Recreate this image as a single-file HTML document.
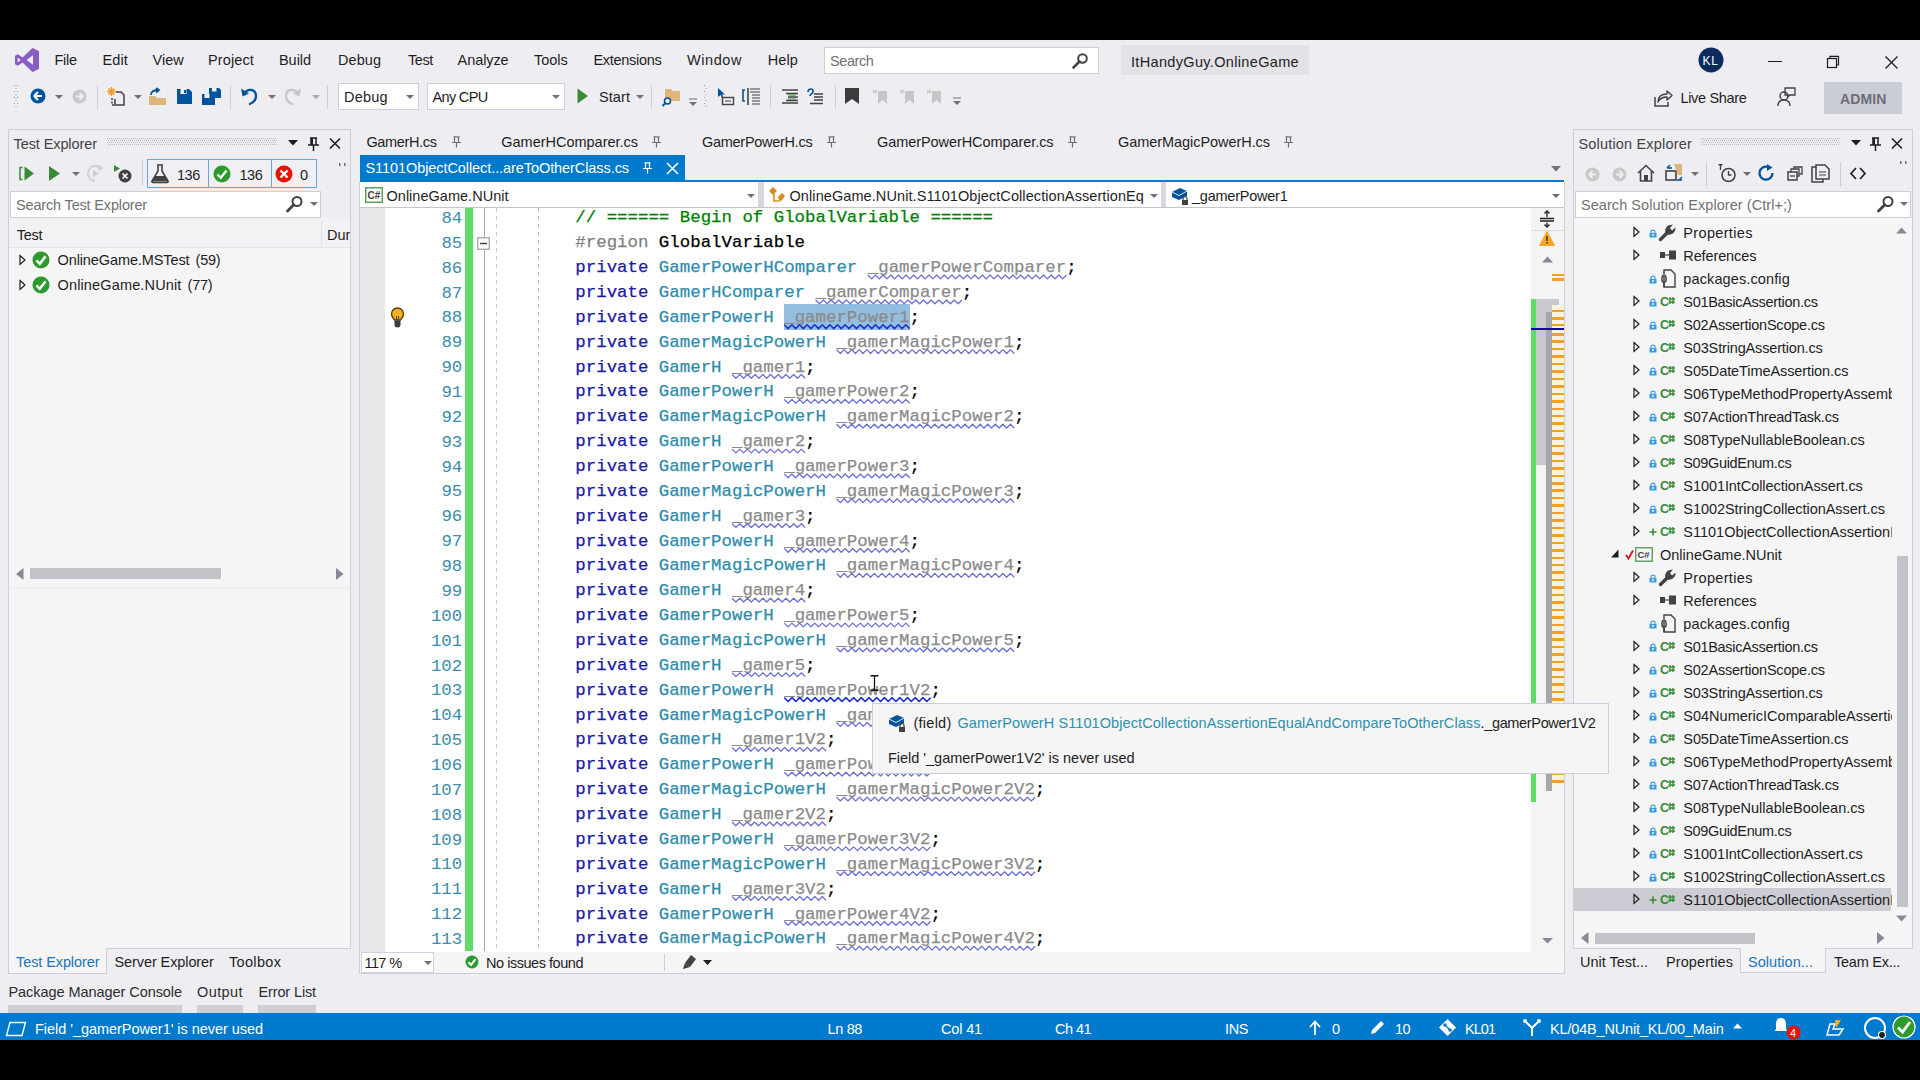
<!DOCTYPE html><html><head><meta charset="utf-8"><title>VS</title><style>html,body{margin:0;padding:0;width:1920px;height:1080px;overflow:hidden;background:#000}
.a{position:absolute;white-space:pre;margin:0;padding:0}
.s{font-family:"Liberation Sans",sans-serif}
.m{font-family:"Liberation Mono",monospace}
.code{font-size:17.4px;line-height:17.4px;letter-spacing:0.008px;-webkit-text-stroke:0.25px currentColor}
svg.a{overflow:visible}
</style></head><body><div class="a" style="left:0px;top:0px;width:1920px;height:40px;background:#000;"></div>
<div class="a" style="left:0px;top:40px;width:1920px;height:1000px;background:#EEEEF2;"></div>
<div class="a" style="left:0px;top:1040px;width:1920px;height:40px;background:#000;"></div>
<svg class="a" style="left:15px;top:48px;" width="24" height="24" viewBox="0 0 24 24"><path fill="#865FC5" fill-rule="evenodd" d="M17.5,0 L24,3 L24,21 L17.5,24 L7.5,14.5 L3,17.8 L0,16.3 L0,7.7 L3,6.2 L7.5,9.5 Z M18,7.3 L18,16.7 L11.6,12 Z M2.6,9.6 L2.6,14.4 L5.6,12 Z"/></svg>
<div class="a s" style="left:54.40px;top:53.23px;font-size:14.5px;line-height:14.5px;color:#1E1E1E;letter-spacing:-0.219px;">File</div>
<div class="a s" style="left:102.50px;top:53.23px;font-size:14.5px;line-height:14.5px;color:#1E1E1E;letter-spacing:0.125px;">Edit</div>
<div class="a s" style="left:152.50px;top:53.23px;font-size:14.5px;line-height:14.5px;color:#1E1E1E;letter-spacing:0.007px;">View</div>
<div class="a s" style="left:208.00px;top:53.23px;font-size:14.5px;line-height:14.5px;color:#1E1E1E;letter-spacing:0.123px;">Project</div>
<div class="a s" style="left:279.00px;top:53.23px;font-size:14.5px;line-height:14.5px;color:#1E1E1E;letter-spacing:-0.050px;">Build</div>
<div class="a s" style="left:338.00px;top:53.23px;font-size:14.5px;line-height:14.5px;color:#1E1E1E;letter-spacing:0.053px;">Debug</div>
<div class="a s" style="left:408.00px;top:53.23px;font-size:14.5px;line-height:14.5px;color:#1E1E1E;letter-spacing:-0.448px;">Test</div>
<div class="a s" style="left:457.60px;top:53.23px;font-size:14.5px;line-height:14.5px;color:#1E1E1E;letter-spacing:-0.085px;">Analyze</div>
<div class="a s" style="left:534.00px;top:53.23px;font-size:14.5px;line-height:14.5px;color:#1E1E1E;letter-spacing:-0.032px;">Tools</div>
<div class="a s" style="left:593.40px;top:53.23px;font-size:14.5px;line-height:14.5px;color:#1E1E1E;letter-spacing:-0.294px;">Extensions</div>
<div class="a s" style="left:687.00px;top:53.23px;font-size:14.5px;line-height:14.5px;color:#1E1E1E;letter-spacing:0.570px;">Window</div>
<div class="a s" style="left:767.70px;top:53.23px;font-size:14.5px;line-height:14.5px;color:#1E1E1E;letter-spacing:0.118px;">Help</div>
<div class="a" style="left:824px;top:47px;width:275px;height:27px;background:#FFFFFF;box-sizing:border-box;border:1px solid #CCCEDB;"></div>
<div class="a s" style="left:830.00px;top:53.73px;font-size:14.5px;line-height:14.5px;color:#717171;letter-spacing:-0.409px;">Search</div>
<svg class="a" style="left:1070px;top:51px;" width="20" height="20" viewBox="0 0 20 20"><circle cx="12.5" cy="7.5" r="4.3" fill="none" stroke="#424242" stroke-width="2"/><path d="M9.5,10.5 L3.5,16.5" stroke="#424242" stroke-width="2.6" stroke-linecap="round"/></svg>
<div class="a" style="left:1121px;top:45px;width:188px;height:30px;background:#E2E2E7;"></div>
<div class="a s" style="left:1131.00px;top:54.73px;font-size:14.5px;line-height:14.5px;color:#1E1E1E;letter-spacing:0.337px;">ItHandyGuy.OnlineGame</div>
<svg class="a" style="left:1698px;top:47px;" width="26" height="26" viewBox="0 0 26 26"><circle cx="13" cy="13" r="12.5" fill="#0C2A5E"/></svg>
<div class="a s" style="left:1702.50px;top:54.84px;font-size:12px;line-height:12px;color:#FFFFFF;letter-spacing:0.656px;">KL</div>
<div class="a" style="left:1768px;top:60.5px;width:14px;height:1.2px;background:#1E1E1E;"></div>
<svg class="a" style="left:1825px;top:54px;" width="16" height="16" viewBox="0 0 16 16"><rect x="2.5" y="4.5" width="9" height="9" fill="none" stroke="#1E1E1E" stroke-width="1.2"/><path d="M5,4.5 V2.3 H13.5 V11 H11.5" fill="none" stroke="#1E1E1E" stroke-width="1.2"/></svg>
<svg class="a" style="left:1884px;top:55px;" width="15" height="15" viewBox="0 0 15 15"><path d="M1.5,1.5 L13.5,13.5 M13.5,1.5 L1.5,13.5" stroke="#1E1E1E" stroke-width="1.3"/></svg>
<svg class="a" style="left:14px;top:85px;" width="5" height="24" viewBox="0 0 5 24"><rect x="0" y="0" width="1" height="1" fill="#999"/><rect x="3" y="0" width="1" height="1" fill="#999"/><rect x="1.5" y="3" width="1" height="1" fill="#999"/><rect x="0" y="6" width="1" height="1" fill="#999"/><rect x="3" y="6" width="1" height="1" fill="#999"/><rect x="1.5" y="9" width="1" height="1" fill="#999"/><rect x="0" y="12" width="1" height="1" fill="#999"/><rect x="3" y="12" width="1" height="1" fill="#999"/><rect x="1.5" y="15" width="1" height="1" fill="#999"/><rect x="0" y="18" width="1" height="1" fill="#999"/><rect x="3" y="18" width="1" height="1" fill="#999"/><rect x="1.5" y="21" width="1" height="1" fill="#999"/></svg>
<svg class="a" style="left:30px;top:88px;" width="16" height="16" viewBox="0 0 16 16"><circle cx="8" cy="8" r="7.5" fill="#00539C"/><path d="M4,8 L8,4 M4,8 L8,12 M4,8 H12" stroke="#fff" stroke-width="2.2" fill="none"/></svg>
<svg class="a" style="left:54.5px;top:94.5px;" width="8" height="5" viewBox="0 0 8 5"><path d="M0,0 H8 L4,4 Z" fill="#717171"/></svg>
<svg class="a" style="left:72px;top:89px;" width="15" height="15" viewBox="0 0 15 15"><circle cx="7.5" cy="7.5" r="7" fill="#C8C8C8"/><path d="M11,7.5 L7.5,4 M11,7.5 L7.5,11 M11,7.5 H4" stroke="#EEE" stroke-width="2" fill="none"/></svg>
<div class="a" style="left:97px;top:85px;width:1px;height:24px;background:#CCCEDB;"></div>
<svg class="a" style="left:107px;top:87px;" width="19" height="19" viewBox="0 0 19 19"><path d="M1.5,1.5 L7.5,7.5 M7.5,1.5 L1.5,7.5 M4.5,0 V9 M0,4.5 H9" stroke="#F09A2E" stroke-width="1.5"/><path d="M9,5 H14 L17,8 V18 H8 V12" fill="none" stroke="#424242" stroke-width="1.5"/><path d="M5,11 V18 H8" stroke="#424242" stroke-width="1.5" stroke-dasharray="2 1.5" fill="none"/></svg>
<svg class="a" style="left:133.5px;top:94.5px;" width="8" height="5" viewBox="0 0 8 5"><path d="M0,0 H8 L4,4 Z" fill="#717171"/></svg>
<svg class="a" style="left:148px;top:88px;" width="19" height="18" viewBox="0 0 19 18"><path d="M1,8 H7 L9,10 H18 V17 H1 Z" fill="#DCB67A"/><path d="M3,7 C3,3 6,2 10,2 M8,0 L11,2 L8,4.5" stroke="#00539C" stroke-width="1.8" fill="none"/></svg>
<svg class="a" style="left:176px;top:88px;" width="17" height="17" viewBox="0 0 17 17"><path d="M1,1 H13 L16,4 V16 H1 Z" fill="#00539C"/><rect x="4.5" y="1" width="6" height="5" fill="#EEEEF2"/><rect x="8" y="2" width="2" height="3" fill="#00539C"/></svg>
<svg class="a" style="left:202px;top:87px;" width="20" height="19" viewBox="0 0 20 19"><path d="M7,1 H17 L19,3 V11 H7 Z" fill="#00539C"/><rect x="10" y="1" width="4.5" height="3.5" fill="#EEEEF2"/><path d="M0,7 H11 L13,9 V18 H0 Z" fill="#00539C"/><rect x="2.5" y="7" width="5" height="4" fill="#EEEEF2"/></svg>
<div class="a" style="left:230px;top:85px;width:1px;height:24px;background:#CCCEDB;"></div>
<svg class="a" style="left:240px;top:87px;" width="18" height="19" viewBox="0 0 18 19"><path d="M4.5,6 C8,1 16,2 16,9 C16,13 13,16 9,17.5" stroke="#00539C" stroke-width="2.3" fill="none"/><path d="M1,1.5 L2.5,9.5 L9,6.5 Z" fill="#00539C"/></svg>
<svg class="a" style="left:268px;top:94.5px;" width="8" height="5" viewBox="0 0 8 5"><path d="M0,0 H8 L4,4 Z" fill="#717171"/></svg>
<svg class="a" style="left:284px;top:87px;" width="18" height="19" viewBox="0 0 18 19"><path d="M13.5,6 C10,1 2,2 2,9 C2,13 5,16 9,17.5" stroke="#C6C6C6" stroke-width="2.3" fill="none"/><path d="M17,1.5 L15.5,9.5 L9,6.5 Z" fill="#C6C6C6"/></svg>
<svg class="a" style="left:312px;top:94.5px;" width="8" height="5" viewBox="0 0 8 5"><path d="M0,0 H8 L4,4 Z" fill="#A8A8A8"/></svg>
<div class="a" style="left:327px;top:85px;width:1px;height:24px;background:#CCCEDB;"></div>
<div class="a" style="left:338px;top:83px;width:81px;height:27px;background:#FFFFFF;box-sizing:border-box;border:1px solid #CCCEDB;"></div>
<div class="a s" style="left:344.00px;top:89.73px;font-size:14.5px;line-height:14.5px;color:#1E1E1E;letter-spacing:0.213px;">Debug</div>
<svg class="a" style="left:405.5px;top:94.5px;" width="8" height="5" viewBox="0 0 8 5"><path d="M0,0 H8 L4,4 Z" fill="#717171"/></svg>
<div class="a" style="left:427px;top:83px;width:138px;height:27px;background:#FFFFFF;box-sizing:border-box;border:1px solid #CCCEDB;"></div>
<div class="a s" style="left:432.50px;top:89.73px;font-size:14.5px;line-height:14.5px;color:#1E1E1E;letter-spacing:-0.663px;">Any CPU</div>
<svg class="a" style="left:551.5px;top:94.5px;" width="8" height="5" viewBox="0 0 8 5"><path d="M0,0 H8 L4,4 Z" fill="#717171"/></svg>
<svg class="a" style="left:577px;top:88px;" width="12" height="16" viewBox="0 0 12 16"><path d="M0.5,0.5 L11,8 L0.5,15.5 Z" fill="#388A34"/></svg>
<div class="a s" style="left:599.00px;top:89.73px;font-size:14.5px;line-height:14.5px;color:#1E1E1E;letter-spacing:0.075px;">Start</div>
<svg class="a" style="left:635.5px;top:94.5px;" width="8" height="5" viewBox="0 0 8 5"><path d="M0,0 H8 L4,4 Z" fill="#717171"/></svg>
<div class="a" style="left:651px;top:85px;width:1px;height:24px;background:#CCCEDB;"></div>
<svg class="a" style="left:661px;top:87px;" width="20" height="20" viewBox="0 0 20 20"><path d="M4,2 H10 L12,4 H19 V14 H4 Z" fill="#DCB67A"/><circle cx="6.5" cy="14" r="3" fill="#EEEEF2" stroke="#00539C" stroke-width="1.6"/><path d="M4.5,16 L1.5,19" stroke="#00539C" stroke-width="2"/></svg>
<svg class="a" style="left:689px;top:98px;" width="9" height="10" viewBox="0 0 9 10"><path d="M0,1 H8" stroke="#717171" stroke-width="1"/><path d="M0,4 H8 L4,8 Z" fill="#717171"/></svg>
<svg class="a" style="left:704px;top:85px;" width="3" height="24" viewBox="0 0 3 24"><rect x="0.0" y="0" width="1" height="1" fill="#999"/><rect x="1.5" y="3" width="1" height="1" fill="#999"/><rect x="0.0" y="6" width="1" height="1" fill="#999"/><rect x="1.5" y="9" width="1" height="1" fill="#999"/><rect x="0.0" y="12" width="1" height="1" fill="#999"/><rect x="1.5" y="15" width="1" height="1" fill="#999"/><rect x="0.0" y="18" width="1" height="1" fill="#999"/><rect x="1.5" y="21" width="1" height="1" fill="#999"/></svg>
<svg class="a" style="left:717px;top:88px;" width="18" height="18" viewBox="0 0 18 18"><path d="M1,0 L1,9 L3.5,7 L5,10 L6.5,9.5 L5,6.5 L8,6.5 Z" fill="#00539C"/><rect x="5.5" y="9.5" width="11" height="7" fill="none" stroke="#424242" stroke-width="1.4"/><path d="M8,13 H14" stroke="#424242" stroke-width="1"/></svg>
<svg class="a" style="left:742px;top:87px;" width="20" height="19" viewBox="0 0 20 19"><path d="M3,3 H1 V14 H3" stroke="#00539C" stroke-width="1.6" fill="none"/><path d="M6,1 V18" stroke="#424242" stroke-width="1.6"/><path d="M8,2 H18 M8,5 H18 M10,8 H18 M10,11 H18 M10,14 H18 M10,17 H18" stroke="#424242" stroke-width="1.2"/></svg>
<div class="a" style="left:770px;top:85px;width:1px;height:24px;background:#CCCEDB;"></div>
<svg class="a" style="left:782px;top:89px;" width="17" height="15" viewBox="0 0 17 15"><path d="M0,1 H16 M4,4.5 H16 M6,8 H16 M4,11.5 H16 M0,14 H16" stroke="#424242" stroke-width="1.3"/><path d="M6,6 H14 M6,10 H14" stroke="#388A34" stroke-width="1.2"/></svg>
<svg class="a" style="left:806px;top:88px;" width="18" height="17" viewBox="0 0 18 17"><path d="M2,4 C2,0 8,0 7,4 C6.5,6 4,6 4,8" stroke="#00539C" stroke-width="1.6" fill="none"/><path d="M8,6 H17 M8,9 H17 M8,12 H17 M4,15.5 H17" stroke="#424242" stroke-width="1.3"/></svg>
<div class="a" style="left:835px;top:85px;width:1px;height:24px;background:#CCCEDB;"></div>
<svg class="a" style="left:845px;top:88px;" width="15" height="17" viewBox="0 0 15 17"><path d="M0,0 H14 V16 L7,11 L0,16 Z" fill="#3C3C3C"/></svg>
<svg class="a" style="left:873px;top:88px;" width="16" height="17" viewBox="0 0 16 17"><path d="M5,3 H14 V16 L9.5,12 L5,16 Z" fill="#C6C6C6"/><path d="M0,2 L4,5 M0,5 L4,2" stroke="#C6C6C6" stroke-width="1.4"/></svg>
<svg class="a" style="left:900px;top:88px;" width="16" height="17" viewBox="0 0 16 17"><path d="M5,3 H14 V16 L9.5,12 L5,16 Z" fill="#C6C6C6"/><path d="M0,2 L4,5 M0,5 L4,2" stroke="#C6C6C6" stroke-width="1.4"/></svg>
<svg class="a" style="left:927px;top:88px;" width="16" height="17" viewBox="0 0 16 17"><path d="M5,3 H14 V16 L9.5,12 L5,16 Z" fill="#C6C6C6"/><path d="M0,2 L4,5 M0,5 L4,2" stroke="#C6C6C6" stroke-width="1.4"/></svg>
<svg class="a" style="left:953px;top:97px;" width="9" height="11" viewBox="0 0 9 11"><path d="M0,1 H8" stroke="#717171" stroke-width="1"/><path d="M0,4 H8 L4,8 Z" fill="#717171"/></svg>
<svg class="a" style="left:1654px;top:89px;" width="19" height="19" viewBox="0 0 19 19"><path d="M1,8 V17 H14 V13" fill="none" stroke="#424242" stroke-width="1.5"/><path d="M4,13 C4,7 8,5 13,5 V2 L18,6.5 L13,11 V8 C9,8 6,9 4,13 Z" fill="none" stroke="#424242" stroke-width="1.4" stroke-linejoin="round"/></svg>
<div class="a s" style="left:1680.50px;top:91.23px;font-size:14.5px;line-height:14.5px;color:#1E1E1E;letter-spacing:-0.333px;">Live Share</div>
<svg class="a" style="left:1777px;top:87px;" width="19" height="20" viewBox="0 0 19 20"><circle cx="7" cy="9" r="4" fill="none" stroke="#424242" stroke-width="1.4"/><path d="M1,19 C1,14 4,13 7,13 C10,13 13,14 13,19" fill="none" stroke="#424242" stroke-width="1.4"/><path d="M8,1 H18 V8 H13 L11,10 V8 H8 Z" fill="none" stroke="#424242" stroke-width="1.3"/></svg>
<div class="a" style="left:1824px;top:82px;width:78px;height:32px;background:#CBCDD6;"></div>
<div class="a s" style="left:1840.00px;top:91.65px;font-size:14px;line-height:14px;color:#6C6D75;font-weight:700;letter-spacing:0.122px;">ADMIN</div>
<div class="a" style="left:8px;top:129px;width:343px;height:820px;background:#EEEEF2;box-sizing:border-box;border:1px solid #CCCEDB;"></div>
<div class="a s" style="left:13.50px;top:136.73px;font-size:14.5px;line-height:14.5px;color:#424242;letter-spacing:-0.094px;">Test Explorer</div>
<svg class="a" style="left:107px;top:138px;" width="170" height="8" viewBox="0 0 170 8"><rect x="0" y="0" width="1" height="1" fill="#B8B8C0"/><rect x="2" y="0" width="1" height="1" fill="#B8B8C0"/><rect x="4" y="0" width="1" height="1" fill="#B8B8C0"/><rect x="6" y="0" width="1" height="1" fill="#B8B8C0"/><rect x="8" y="0" width="1" height="1" fill="#B8B8C0"/><rect x="10" y="0" width="1" height="1" fill="#B8B8C0"/><rect x="12" y="0" width="1" height="1" fill="#B8B8C0"/><rect x="14" y="0" width="1" height="1" fill="#B8B8C0"/><rect x="16" y="0" width="1" height="1" fill="#B8B8C0"/><rect x="18" y="0" width="1" height="1" fill="#B8B8C0"/><rect x="20" y="0" width="1" height="1" fill="#B8B8C0"/><rect x="22" y="0" width="1" height="1" fill="#B8B8C0"/><rect x="24" y="0" width="1" height="1" fill="#B8B8C0"/><rect x="26" y="0" width="1" height="1" fill="#B8B8C0"/><rect x="28" y="0" width="1" height="1" fill="#B8B8C0"/><rect x="30" y="0" width="1" height="1" fill="#B8B8C0"/><rect x="32" y="0" width="1" height="1" fill="#B8B8C0"/><rect x="34" y="0" width="1" height="1" fill="#B8B8C0"/><rect x="36" y="0" width="1" height="1" fill="#B8B8C0"/><rect x="38" y="0" width="1" height="1" fill="#B8B8C0"/><rect x="40" y="0" width="1" height="1" fill="#B8B8C0"/><rect x="42" y="0" width="1" height="1" fill="#B8B8C0"/><rect x="44" y="0" width="1" height="1" fill="#B8B8C0"/><rect x="46" y="0" width="1" height="1" fill="#B8B8C0"/><rect x="48" y="0" width="1" height="1" fill="#B8B8C0"/><rect x="50" y="0" width="1" height="1" fill="#B8B8C0"/><rect x="52" y="0" width="1" height="1" fill="#B8B8C0"/><rect x="54" y="0" width="1" height="1" fill="#B8B8C0"/><rect x="56" y="0" width="1" height="1" fill="#B8B8C0"/><rect x="58" y="0" width="1" height="1" fill="#B8B8C0"/><rect x="60" y="0" width="1" height="1" fill="#B8B8C0"/><rect x="62" y="0" width="1" height="1" fill="#B8B8C0"/><rect x="64" y="0" width="1" height="1" fill="#B8B8C0"/><rect x="66" y="0" width="1" height="1" fill="#B8B8C0"/><rect x="68" y="0" width="1" height="1" fill="#B8B8C0"/><rect x="70" y="0" width="1" height="1" fill="#B8B8C0"/><rect x="72" y="0" width="1" height="1" fill="#B8B8C0"/><rect x="74" y="0" width="1" height="1" fill="#B8B8C0"/><rect x="76" y="0" width="1" height="1" fill="#B8B8C0"/><rect x="78" y="0" width="1" height="1" fill="#B8B8C0"/><rect x="80" y="0" width="1" height="1" fill="#B8B8C0"/><rect x="82" y="0" width="1" height="1" fill="#B8B8C0"/><rect x="84" y="0" width="1" height="1" fill="#B8B8C0"/><rect x="86" y="0" width="1" height="1" fill="#B8B8C0"/><rect x="88" y="0" width="1" height="1" fill="#B8B8C0"/><rect x="90" y="0" width="1" height="1" fill="#B8B8C0"/><rect x="92" y="0" width="1" height="1" fill="#B8B8C0"/><rect x="94" y="0" width="1" height="1" fill="#B8B8C0"/><rect x="96" y="0" width="1" height="1" fill="#B8B8C0"/><rect x="98" y="0" width="1" height="1" fill="#B8B8C0"/><rect x="100" y="0" width="1" height="1" fill="#B8B8C0"/><rect x="102" y="0" width="1" height="1" fill="#B8B8C0"/><rect x="104" y="0" width="1" height="1" fill="#B8B8C0"/><rect x="106" y="0" width="1" height="1" fill="#B8B8C0"/><rect x="108" y="0" width="1" height="1" fill="#B8B8C0"/><rect x="110" y="0" width="1" height="1" fill="#B8B8C0"/><rect x="112" y="0" width="1" height="1" fill="#B8B8C0"/><rect x="114" y="0" width="1" height="1" fill="#B8B8C0"/><rect x="116" y="0" width="1" height="1" fill="#B8B8C0"/><rect x="118" y="0" width="1" height="1" fill="#B8B8C0"/><rect x="120" y="0" width="1" height="1" fill="#B8B8C0"/><rect x="122" y="0" width="1" height="1" fill="#B8B8C0"/><rect x="124" y="0" width="1" height="1" fill="#B8B8C0"/><rect x="126" y="0" width="1" height="1" fill="#B8B8C0"/><rect x="128" y="0" width="1" height="1" fill="#B8B8C0"/><rect x="130" y="0" width="1" height="1" fill="#B8B8C0"/><rect x="132" y="0" width="1" height="1" fill="#B8B8C0"/><rect x="134" y="0" width="1" height="1" fill="#B8B8C0"/><rect x="136" y="0" width="1" height="1" fill="#B8B8C0"/><rect x="138" y="0" width="1" height="1" fill="#B8B8C0"/><rect x="140" y="0" width="1" height="1" fill="#B8B8C0"/><rect x="142" y="0" width="1" height="1" fill="#B8B8C0"/><rect x="144" y="0" width="1" height="1" fill="#B8B8C0"/><rect x="146" y="0" width="1" height="1" fill="#B8B8C0"/><rect x="148" y="0" width="1" height="1" fill="#B8B8C0"/><rect x="150" y="0" width="1" height="1" fill="#B8B8C0"/><rect x="152" y="0" width="1" height="1" fill="#B8B8C0"/><rect x="154" y="0" width="1" height="1" fill="#B8B8C0"/><rect x="156" y="0" width="1" height="1" fill="#B8B8C0"/><rect x="158" y="0" width="1" height="1" fill="#B8B8C0"/><rect x="160" y="0" width="1" height="1" fill="#B8B8C0"/><rect x="162" y="0" width="1" height="1" fill="#B8B8C0"/><rect x="164" y="0" width="1" height="1" fill="#B8B8C0"/><rect x="166" y="0" width="1" height="1" fill="#B8B8C0"/><rect x="168" y="0" width="1" height="1" fill="#B8B8C0"/><rect x="1" y="2" width="1" height="1" fill="#B8B8C0"/><rect x="3" y="2" width="1" height="1" fill="#B8B8C0"/><rect x="5" y="2" width="1" height="1" fill="#B8B8C0"/><rect x="7" y="2" width="1" height="1" fill="#B8B8C0"/><rect x="9" y="2" width="1" height="1" fill="#B8B8C0"/><rect x="11" y="2" width="1" height="1" fill="#B8B8C0"/><rect x="13" y="2" width="1" height="1" fill="#B8B8C0"/><rect x="15" y="2" width="1" height="1" fill="#B8B8C0"/><rect x="17" y="2" width="1" height="1" fill="#B8B8C0"/><rect x="19" y="2" width="1" height="1" fill="#B8B8C0"/><rect x="21" y="2" width="1" height="1" fill="#B8B8C0"/><rect x="23" y="2" width="1" height="1" fill="#B8B8C0"/><rect x="25" y="2" width="1" height="1" fill="#B8B8C0"/><rect x="27" y="2" width="1" height="1" fill="#B8B8C0"/><rect x="29" y="2" width="1" height="1" fill="#B8B8C0"/><rect x="31" y="2" width="1" height="1" fill="#B8B8C0"/><rect x="33" y="2" width="1" height="1" fill="#B8B8C0"/><rect x="35" y="2" width="1" height="1" fill="#B8B8C0"/><rect x="37" y="2" width="1" height="1" fill="#B8B8C0"/><rect x="39" y="2" width="1" height="1" fill="#B8B8C0"/><rect x="41" y="2" width="1" height="1" fill="#B8B8C0"/><rect x="43" y="2" width="1" height="1" fill="#B8B8C0"/><rect x="45" y="2" width="1" height="1" fill="#B8B8C0"/><rect x="47" y="2" width="1" height="1" fill="#B8B8C0"/><rect x="49" y="2" width="1" height="1" fill="#B8B8C0"/><rect x="51" y="2" width="1" height="1" fill="#B8B8C0"/><rect x="53" y="2" width="1" height="1" fill="#B8B8C0"/><rect x="55" y="2" width="1" height="1" fill="#B8B8C0"/><rect x="57" y="2" width="1" height="1" fill="#B8B8C0"/><rect x="59" y="2" width="1" height="1" fill="#B8B8C0"/><rect x="61" y="2" width="1" height="1" fill="#B8B8C0"/><rect x="63" y="2" width="1" height="1" fill="#B8B8C0"/><rect x="65" y="2" width="1" height="1" fill="#B8B8C0"/><rect x="67" y="2" width="1" height="1" fill="#B8B8C0"/><rect x="69" y="2" width="1" height="1" fill="#B8B8C0"/><rect x="71" y="2" width="1" height="1" fill="#B8B8C0"/><rect x="73" y="2" width="1" height="1" fill="#B8B8C0"/><rect x="75" y="2" width="1" height="1" fill="#B8B8C0"/><rect x="77" y="2" width="1" height="1" fill="#B8B8C0"/><rect x="79" y="2" width="1" height="1" fill="#B8B8C0"/><rect x="81" y="2" width="1" height="1" fill="#B8B8C0"/><rect x="83" y="2" width="1" height="1" fill="#B8B8C0"/><rect x="85" y="2" width="1" height="1" fill="#B8B8C0"/><rect x="87" y="2" width="1" height="1" fill="#B8B8C0"/><rect x="89" y="2" width="1" height="1" fill="#B8B8C0"/><rect x="91" y="2" width="1" height="1" fill="#B8B8C0"/><rect x="93" y="2" width="1" height="1" fill="#B8B8C0"/><rect x="95" y="2" width="1" height="1" fill="#B8B8C0"/><rect x="97" y="2" width="1" height="1" fill="#B8B8C0"/><rect x="99" y="2" width="1" height="1" fill="#B8B8C0"/><rect x="101" y="2" width="1" height="1" fill="#B8B8C0"/><rect x="103" y="2" width="1" height="1" fill="#B8B8C0"/><rect x="105" y="2" width="1" height="1" fill="#B8B8C0"/><rect x="107" y="2" width="1" height="1" fill="#B8B8C0"/><rect x="109" y="2" width="1" height="1" fill="#B8B8C0"/><rect x="111" y="2" width="1" height="1" fill="#B8B8C0"/><rect x="113" y="2" width="1" height="1" fill="#B8B8C0"/><rect x="115" y="2" width="1" height="1" fill="#B8B8C0"/><rect x="117" y="2" width="1" height="1" fill="#B8B8C0"/><rect x="119" y="2" width="1" height="1" fill="#B8B8C0"/><rect x="121" y="2" width="1" height="1" fill="#B8B8C0"/><rect x="123" y="2" width="1" height="1" fill="#B8B8C0"/><rect x="125" y="2" width="1" height="1" fill="#B8B8C0"/><rect x="127" y="2" width="1" height="1" fill="#B8B8C0"/><rect x="129" y="2" width="1" height="1" fill="#B8B8C0"/><rect x="131" y="2" width="1" height="1" fill="#B8B8C0"/><rect x="133" y="2" width="1" height="1" fill="#B8B8C0"/><rect x="135" y="2" width="1" height="1" fill="#B8B8C0"/><rect x="137" y="2" width="1" height="1" fill="#B8B8C0"/><rect x="139" y="2" width="1" height="1" fill="#B8B8C0"/><rect x="141" y="2" width="1" height="1" fill="#B8B8C0"/><rect x="143" y="2" width="1" height="1" fill="#B8B8C0"/><rect x="145" y="2" width="1" height="1" fill="#B8B8C0"/><rect x="147" y="2" width="1" height="1" fill="#B8B8C0"/><rect x="149" y="2" width="1" height="1" fill="#B8B8C0"/><rect x="151" y="2" width="1" height="1" fill="#B8B8C0"/><rect x="153" y="2" width="1" height="1" fill="#B8B8C0"/><rect x="155" y="2" width="1" height="1" fill="#B8B8C0"/><rect x="157" y="2" width="1" height="1" fill="#B8B8C0"/><rect x="159" y="2" width="1" height="1" fill="#B8B8C0"/><rect x="161" y="2" width="1" height="1" fill="#B8B8C0"/><rect x="163" y="2" width="1" height="1" fill="#B8B8C0"/><rect x="165" y="2" width="1" height="1" fill="#B8B8C0"/><rect x="167" y="2" width="1" height="1" fill="#B8B8C0"/><rect x="169" y="2" width="1" height="1" fill="#B8B8C0"/><rect x="0" y="4" width="1" height="1" fill="#B8B8C0"/><rect x="2" y="4" width="1" height="1" fill="#B8B8C0"/><rect x="4" y="4" width="1" height="1" fill="#B8B8C0"/><rect x="6" y="4" width="1" height="1" fill="#B8B8C0"/><rect x="8" y="4" width="1" height="1" fill="#B8B8C0"/><rect x="10" y="4" width="1" height="1" fill="#B8B8C0"/><rect x="12" y="4" width="1" height="1" fill="#B8B8C0"/><rect x="14" y="4" width="1" height="1" fill="#B8B8C0"/><rect x="16" y="4" width="1" height="1" fill="#B8B8C0"/><rect x="18" y="4" width="1" height="1" fill="#B8B8C0"/><rect x="20" y="4" width="1" height="1" fill="#B8B8C0"/><rect x="22" y="4" width="1" height="1" fill="#B8B8C0"/><rect x="24" y="4" width="1" height="1" fill="#B8B8C0"/><rect x="26" y="4" width="1" height="1" fill="#B8B8C0"/><rect x="28" y="4" width="1" height="1" fill="#B8B8C0"/><rect x="30" y="4" width="1" height="1" fill="#B8B8C0"/><rect x="32" y="4" width="1" height="1" fill="#B8B8C0"/><rect x="34" y="4" width="1" height="1" fill="#B8B8C0"/><rect x="36" y="4" width="1" height="1" fill="#B8B8C0"/><rect x="38" y="4" width="1" height="1" fill="#B8B8C0"/><rect x="40" y="4" width="1" height="1" fill="#B8B8C0"/><rect x="42" y="4" width="1" height="1" fill="#B8B8C0"/><rect x="44" y="4" width="1" height="1" fill="#B8B8C0"/><rect x="46" y="4" width="1" height="1" fill="#B8B8C0"/><rect x="48" y="4" width="1" height="1" fill="#B8B8C0"/><rect x="50" y="4" width="1" height="1" fill="#B8B8C0"/><rect x="52" y="4" width="1" height="1" fill="#B8B8C0"/><rect x="54" y="4" width="1" height="1" fill="#B8B8C0"/><rect x="56" y="4" width="1" height="1" fill="#B8B8C0"/><rect x="58" y="4" width="1" height="1" fill="#B8B8C0"/><rect x="60" y="4" width="1" height="1" fill="#B8B8C0"/><rect x="62" y="4" width="1" height="1" fill="#B8B8C0"/><rect x="64" y="4" width="1" height="1" fill="#B8B8C0"/><rect x="66" y="4" width="1" height="1" fill="#B8B8C0"/><rect x="68" y="4" width="1" height="1" fill="#B8B8C0"/><rect x="70" y="4" width="1" height="1" fill="#B8B8C0"/><rect x="72" y="4" width="1" height="1" fill="#B8B8C0"/><rect x="74" y="4" width="1" height="1" fill="#B8B8C0"/><rect x="76" y="4" width="1" height="1" fill="#B8B8C0"/><rect x="78" y="4" width="1" height="1" fill="#B8B8C0"/><rect x="80" y="4" width="1" height="1" fill="#B8B8C0"/><rect x="82" y="4" width="1" height="1" fill="#B8B8C0"/><rect x="84" y="4" width="1" height="1" fill="#B8B8C0"/><rect x="86" y="4" width="1" height="1" fill="#B8B8C0"/><rect x="88" y="4" width="1" height="1" fill="#B8B8C0"/><rect x="90" y="4" width="1" height="1" fill="#B8B8C0"/><rect x="92" y="4" width="1" height="1" fill="#B8B8C0"/><rect x="94" y="4" width="1" height="1" fill="#B8B8C0"/><rect x="96" y="4" width="1" height="1" fill="#B8B8C0"/><rect x="98" y="4" width="1" height="1" fill="#B8B8C0"/><rect x="100" y="4" width="1" height="1" fill="#B8B8C0"/><rect x="102" y="4" width="1" height="1" fill="#B8B8C0"/><rect x="104" y="4" width="1" height="1" fill="#B8B8C0"/><rect x="106" y="4" width="1" height="1" fill="#B8B8C0"/><rect x="108" y="4" width="1" height="1" fill="#B8B8C0"/><rect x="110" y="4" width="1" height="1" fill="#B8B8C0"/><rect x="112" y="4" width="1" height="1" fill="#B8B8C0"/><rect x="114" y="4" width="1" height="1" fill="#B8B8C0"/><rect x="116" y="4" width="1" height="1" fill="#B8B8C0"/><rect x="118" y="4" width="1" height="1" fill="#B8B8C0"/><rect x="120" y="4" width="1" height="1" fill="#B8B8C0"/><rect x="122" y="4" width="1" height="1" fill="#B8B8C0"/><rect x="124" y="4" width="1" height="1" fill="#B8B8C0"/><rect x="126" y="4" width="1" height="1" fill="#B8B8C0"/><rect x="128" y="4" width="1" height="1" fill="#B8B8C0"/><rect x="130" y="4" width="1" height="1" fill="#B8B8C0"/><rect x="132" y="4" width="1" height="1" fill="#B8B8C0"/><rect x="134" y="4" width="1" height="1" fill="#B8B8C0"/><rect x="136" y="4" width="1" height="1" fill="#B8B8C0"/><rect x="138" y="4" width="1" height="1" fill="#B8B8C0"/><rect x="140" y="4" width="1" height="1" fill="#B8B8C0"/><rect x="142" y="4" width="1" height="1" fill="#B8B8C0"/><rect x="144" y="4" width="1" height="1" fill="#B8B8C0"/><rect x="146" y="4" width="1" height="1" fill="#B8B8C0"/><rect x="148" y="4" width="1" height="1" fill="#B8B8C0"/><rect x="150" y="4" width="1" height="1" fill="#B8B8C0"/><rect x="152" y="4" width="1" height="1" fill="#B8B8C0"/><rect x="154" y="4" width="1" height="1" fill="#B8B8C0"/><rect x="156" y="4" width="1" height="1" fill="#B8B8C0"/><rect x="158" y="4" width="1" height="1" fill="#B8B8C0"/><rect x="160" y="4" width="1" height="1" fill="#B8B8C0"/><rect x="162" y="4" width="1" height="1" fill="#B8B8C0"/><rect x="164" y="4" width="1" height="1" fill="#B8B8C0"/><rect x="166" y="4" width="1" height="1" fill="#B8B8C0"/><rect x="168" y="4" width="1" height="1" fill="#B8B8C0"/><rect x="1" y="6" width="1" height="1" fill="#B8B8C0"/><rect x="3" y="6" width="1" height="1" fill="#B8B8C0"/><rect x="5" y="6" width="1" height="1" fill="#B8B8C0"/><rect x="7" y="6" width="1" height="1" fill="#B8B8C0"/><rect x="9" y="6" width="1" height="1" fill="#B8B8C0"/><rect x="11" y="6" width="1" height="1" fill="#B8B8C0"/><rect x="13" y="6" width="1" height="1" fill="#B8B8C0"/><rect x="15" y="6" width="1" height="1" fill="#B8B8C0"/><rect x="17" y="6" width="1" height="1" fill="#B8B8C0"/><rect x="19" y="6" width="1" height="1" fill="#B8B8C0"/><rect x="21" y="6" width="1" height="1" fill="#B8B8C0"/><rect x="23" y="6" width="1" height="1" fill="#B8B8C0"/><rect x="25" y="6" width="1" height="1" fill="#B8B8C0"/><rect x="27" y="6" width="1" height="1" fill="#B8B8C0"/><rect x="29" y="6" width="1" height="1" fill="#B8B8C0"/><rect x="31" y="6" width="1" height="1" fill="#B8B8C0"/><rect x="33" y="6" width="1" height="1" fill="#B8B8C0"/><rect x="35" y="6" width="1" height="1" fill="#B8B8C0"/><rect x="37" y="6" width="1" height="1" fill="#B8B8C0"/><rect x="39" y="6" width="1" height="1" fill="#B8B8C0"/><rect x="41" y="6" width="1" height="1" fill="#B8B8C0"/><rect x="43" y="6" width="1" height="1" fill="#B8B8C0"/><rect x="45" y="6" width="1" height="1" fill="#B8B8C0"/><rect x="47" y="6" width="1" height="1" fill="#B8B8C0"/><rect x="49" y="6" width="1" height="1" fill="#B8B8C0"/><rect x="51" y="6" width="1" height="1" fill="#B8B8C0"/><rect x="53" y="6" width="1" height="1" fill="#B8B8C0"/><rect x="55" y="6" width="1" height="1" fill="#B8B8C0"/><rect x="57" y="6" width="1" height="1" fill="#B8B8C0"/><rect x="59" y="6" width="1" height="1" fill="#B8B8C0"/><rect x="61" y="6" width="1" height="1" fill="#B8B8C0"/><rect x="63" y="6" width="1" height="1" fill="#B8B8C0"/><rect x="65" y="6" width="1" height="1" fill="#B8B8C0"/><rect x="67" y="6" width="1" height="1" fill="#B8B8C0"/><rect x="69" y="6" width="1" height="1" fill="#B8B8C0"/><rect x="71" y="6" width="1" height="1" fill="#B8B8C0"/><rect x="73" y="6" width="1" height="1" fill="#B8B8C0"/><rect x="75" y="6" width="1" height="1" fill="#B8B8C0"/><rect x="77" y="6" width="1" height="1" fill="#B8B8C0"/><rect x="79" y="6" width="1" height="1" fill="#B8B8C0"/><rect x="81" y="6" width="1" height="1" fill="#B8B8C0"/><rect x="83" y="6" width="1" height="1" fill="#B8B8C0"/><rect x="85" y="6" width="1" height="1" fill="#B8B8C0"/><rect x="87" y="6" width="1" height="1" fill="#B8B8C0"/><rect x="89" y="6" width="1" height="1" fill="#B8B8C0"/><rect x="91" y="6" width="1" height="1" fill="#B8B8C0"/><rect x="93" y="6" width="1" height="1" fill="#B8B8C0"/><rect x="95" y="6" width="1" height="1" fill="#B8B8C0"/><rect x="97" y="6" width="1" height="1" fill="#B8B8C0"/><rect x="99" y="6" width="1" height="1" fill="#B8B8C0"/><rect x="101" y="6" width="1" height="1" fill="#B8B8C0"/><rect x="103" y="6" width="1" height="1" fill="#B8B8C0"/><rect x="105" y="6" width="1" height="1" fill="#B8B8C0"/><rect x="107" y="6" width="1" height="1" fill="#B8B8C0"/><rect x="109" y="6" width="1" height="1" fill="#B8B8C0"/><rect x="111" y="6" width="1" height="1" fill="#B8B8C0"/><rect x="113" y="6" width="1" height="1" fill="#B8B8C0"/><rect x="115" y="6" width="1" height="1" fill="#B8B8C0"/><rect x="117" y="6" width="1" height="1" fill="#B8B8C0"/><rect x="119" y="6" width="1" height="1" fill="#B8B8C0"/><rect x="121" y="6" width="1" height="1" fill="#B8B8C0"/><rect x="123" y="6" width="1" height="1" fill="#B8B8C0"/><rect x="125" y="6" width="1" height="1" fill="#B8B8C0"/><rect x="127" y="6" width="1" height="1" fill="#B8B8C0"/><rect x="129" y="6" width="1" height="1" fill="#B8B8C0"/><rect x="131" y="6" width="1" height="1" fill="#B8B8C0"/><rect x="133" y="6" width="1" height="1" fill="#B8B8C0"/><rect x="135" y="6" width="1" height="1" fill="#B8B8C0"/><rect x="137" y="6" width="1" height="1" fill="#B8B8C0"/><rect x="139" y="6" width="1" height="1" fill="#B8B8C0"/><rect x="141" y="6" width="1" height="1" fill="#B8B8C0"/><rect x="143" y="6" width="1" height="1" fill="#B8B8C0"/><rect x="145" y="6" width="1" height="1" fill="#B8B8C0"/><rect x="147" y="6" width="1" height="1" fill="#B8B8C0"/><rect x="149" y="6" width="1" height="1" fill="#B8B8C0"/><rect x="151" y="6" width="1" height="1" fill="#B8B8C0"/><rect x="153" y="6" width="1" height="1" fill="#B8B8C0"/><rect x="155" y="6" width="1" height="1" fill="#B8B8C0"/><rect x="157" y="6" width="1" height="1" fill="#B8B8C0"/><rect x="159" y="6" width="1" height="1" fill="#B8B8C0"/><rect x="161" y="6" width="1" height="1" fill="#B8B8C0"/><rect x="163" y="6" width="1" height="1" fill="#B8B8C0"/><rect x="165" y="6" width="1" height="1" fill="#B8B8C0"/><rect x="167" y="6" width="1" height="1" fill="#B8B8C0"/><rect x="169" y="6" width="1" height="1" fill="#B8B8C0"/></svg>
<svg class="a" style="left:288px;top:140px;" width="10" height="6" viewBox="0 0 10 6"><path d="M0,0 H10 L5,5.5 Z" fill="#1E1E1E"/></svg>
<svg class="a" style="left:308px;top:137px;" width="11" height="14" viewBox="0 0 11 14"><path d="M2,1 H9 M3,1 V8 M8,1 V8 M0,8 H11 M5.5,8 V14" stroke="#1E1E1E" stroke-width="1.5" fill="none"/><rect x="3" y="1" width="2" height="7" fill="#1E1E1E"/></svg>
<svg class="a" style="left:329px;top:138px;" width="12" height="11" viewBox="0 0 12 11"><path d="M1,0.5 L11,10.5 M11,0.5 L1,10.5" stroke="#1E1E1E" stroke-width="1.6"/></svg>
<svg class="a" style="left:18px;top:165px;" width="18" height="17" viewBox="0 0 18 17"><path d="M4.5,2.5 H2 V14.5 H4.5" fill="none" stroke="#388A34" stroke-width="1.5"/><path d="M6.5,1.5 L16,8.5 L6.5,15.5 Z" fill="#388A34"/></svg>
<svg class="a" style="left:48px;top:165px;" width="13" height="17" viewBox="0 0 13 17"><path d="M1,1 L12,8.5 L1,16 Z" fill="#388A34"/></svg>
<svg class="a" style="left:72px;top:172px;" width="8" height="5" viewBox="0 0 8 5"><path d="M0,0 H8 L4,4 Z" fill="#717171"/></svg>
<svg class="a" style="left:87px;top:165px;" width="17" height="17" viewBox="0 0 17 17"><path d="M13,3 C11,1 9,1 8,1 C4,1 1,4 1,8.5 C1,13 4,16 8,16" stroke="#D0D0D0" stroke-width="1.8" fill="none"/><path d="M6,5 L12,8.5 L6,12 Z" fill="#D0D0D0"/><path d="M11,0 L15,3 L11,5" stroke="#D0D0D0" stroke-width="1.5" fill="none"/></svg>
<svg class="a" style="left:113px;top:164px;" width="20" height="19" viewBox="0 0 20 19"><path d="M1,1 L7,4.5 L1,8 Z" fill="#388A34"/><circle cx="12" cy="12" r="6.5" fill="#424242"/><path d="M9.5,9.5 L14.5,14.5 M14.5,9.5 L9.5,14.5" stroke="#fff" stroke-width="1.6"/></svg>
<div class="a" style="left:142px;top:160px;width:1px;height:25px;background:#CCCEDB;"></div>
<div class="a" style="left:147px;top:159px;width:170px;height:29px;background:#F0F0F4;box-sizing:border-box;border:1.3px solid #5EA6E6;"></div>
<div class="a" style="left:208px;top:159px;width:1.3px;height:29px;background:#5EA6E6;"></div>
<div class="a" style="left:271px;top:159px;width:1.3px;height:29px;background:#5EA6E6;"></div>
<svg class="a" style="left:151px;top:164px;" width="18" height="19" viewBox="0 0 18 19"><path d="M6,1 H12 M7,1 V7 L1,17 Q0.5,18.5 2,18.5 H16 Q17.5,18.5 17,17 L11,7 V1" fill="none" stroke="#424242" stroke-width="1.6"/><path d="M4,12 H14 L17,17.5 H1 Z" fill="#424242"/></svg>
<div class="a s" style="left:177.00px;top:168.23px;font-size:14.5px;line-height:14.5px;color:#1E1E1E;letter-spacing:-0.501px;">136</div>
<svg class="a" style="left:213px;top:165px;" width="18" height="18" viewBox="0 0 18 18"><circle cx="9" cy="9" r="8.5" fill="#2C9A2C"/><path d="M4.5,9.5 L7.8,12.8 L13.5,5.5" stroke="#fff" stroke-width="2.4" fill="none"/></svg>
<div class="a s" style="left:239.50px;top:168.23px;font-size:14.5px;line-height:14.5px;color:#1E1E1E;letter-spacing:-0.501px;">136</div>
<svg class="a" style="left:275px;top:165px;" width="18" height="18" viewBox="0 0 18 18"><circle cx="9" cy="9" r="8.5" fill="#E51400"/><path d="M5.5,5.5 L12.5,12.5 M12.5,5.5 L5.5,12.5" stroke="#fff" stroke-width="2.4"/></svg>
<div class="a s" style="left:300.00px;top:168.23px;font-size:14.5px;line-height:14.5px;color:#1E1E1E;">0</div>
<svg class="a" style="left:339px;top:163px;" width="7" height="4" viewBox="0 0 7 4"><rect x="0" y="0" width="1.5" height="3" fill="#717171"/><rect x="5" y="0" width="1.5" height="3" fill="#717171"/></svg>
<div class="a" style="left:10px;top:191px;width:311px;height:27px;background:#FFFFFF;box-sizing:border-box;border:1px solid #CCCEDB;"></div>
<div class="a s" style="left:16.00px;top:197.73px;font-size:14.5px;line-height:14.5px;color:#717171;letter-spacing:-0.166px;">Search Test Explorer</div>
<svg class="a" style="left:285px;top:195px;" width="19" height="18" viewBox="0 0 19 18"><circle cx="12" cy="6.5" r="4.5" fill="none" stroke="#424242" stroke-width="2"/><path d="M8.8,9.8 L2.5,16" stroke="#424242" stroke-width="2.8" stroke-linecap="round"/></svg>
<svg class="a" style="left:309.5px;top:202px;" width="8" height="5" viewBox="0 0 8 5"><path d="M0,0 H8 L4,4 Z" fill="#717171"/></svg>
<div class="a" style="left:9px;top:218px;width:341px;height:30px;background:#F2F2F5;"></div>
<div class="a" style="left:9px;top:248px;width:341px;height:700px;background:#F5F5F5;"></div>
<div class="a" style="left:321px;top:221px;width:1px;height:27px;background:#E0E0E6;"></div>
<div class="a" style="left:9px;top:247px;width:341px;height:1px;background:#E4E4EA;"></div>
<div class="a s" style="left:16.80px;top:227.73px;font-size:14.5px;line-height:14.5px;color:#1E1E1E;letter-spacing:-0.273px;">Test</div>
<div class="a s" style="left:327.00px;top:227.73px;font-size:14.5px;line-height:14.5px;color:#1E1E1E;width:23px;overflow:hidden;">Dur</div>
<svg class="a" style="left:19px;top:254px;" width="8" height="12" viewBox="0 0 8 12"><path d="M1,1.5 L6,6 L1,10.5 Z" fill="none" stroke="#1E1E1E" stroke-width="1.2"/></svg>
<svg class="a" style="left:32px;top:251px;" width="18" height="18" viewBox="0 0 18 18"><circle cx="9.0" cy="9.0" r="8.5" fill="#2C9A2C"/><path d="M4.5,9.36 L7.74,12.78 L13.5,5.3999999999999995" stroke="#fff" stroke-width="2.5200000000000005" fill="none"/></svg>
<div class="a s" style="left:57.50px;top:253.23px;font-size:14.5px;line-height:14.5px;color:#1E1E1E;letter-spacing:-0.105px;">OnlineGame.MSTest</div>
<div class="a s" style="left:195.50px;top:253.23px;font-size:14.5px;line-height:14.5px;color:#1E1E1E;letter-spacing:-0.199px;">(59)</div>
<svg class="a" style="left:19px;top:279px;" width="8" height="12" viewBox="0 0 8 12"><path d="M1,1.5 L6,6 L1,10.5 Z" fill="none" stroke="#1E1E1E" stroke-width="1.2"/></svg>
<svg class="a" style="left:32px;top:276px;" width="18" height="18" viewBox="0 0 18 18"><circle cx="9.0" cy="9.0" r="8.5" fill="#2C9A2C"/><path d="M4.5,9.36 L7.74,12.78 L13.5,5.3999999999999995" stroke="#fff" stroke-width="2.5200000000000005" fill="none"/></svg>
<div class="a s" style="left:57.50px;top:278.23px;font-size:14.5px;line-height:14.5px;color:#1E1E1E;letter-spacing:0.145px;">OnlineGame.NUnit</div>
<div class="a s" style="left:187.50px;top:278.23px;font-size:14.5px;line-height:14.5px;color:#1E1E1E;letter-spacing:-0.199px;">(77)</div>
<svg class="a" style="left:16px;top:568px;" width="8" height="12" viewBox="0 0 8 12"><path d="M7.5,0 V12 L0,6 Z" fill="#868999"/></svg>
<div class="a" style="left:30px;top:568px;width:191px;height:11px;background:#C2C3C9;"></div>
<svg class="a" style="left:336px;top:568px;" width="8" height="12" viewBox="0 0 8 12"><path d="M0,0 V12 L7.5,6 Z" fill="#868999"/></svg>
<div class="a" style="left:9px;top:588px;width:341px;height:1px;background:#ECECEE;"></div>
<div class="a" style="left:8px;top:948px;width:99px;height:26px;background:#F5F5F5;box-sizing:border-box;border:1px solid #CCCEDB;border-top:none;"></div>
<div class="a s" style="left:16.00px;top:954.73px;font-size:14.5px;line-height:14.5px;color:#1C74BD;letter-spacing:-0.094px;">Test Explorer</div>
<div class="a s" style="left:114.50px;top:954.73px;font-size:14.5px;line-height:14.5px;color:#1E1E1E;letter-spacing:-0.096px;">Server Explorer</div>
<div class="a s" style="left:229.00px;top:954.73px;font-size:14.5px;line-height:14.5px;color:#1E1E1E;letter-spacing:0.331px;">Toolbox</div>
<div class="a s" style="left:8.50px;top:984.73px;font-size:14.5px;line-height:14.5px;color:#2D2D2D;letter-spacing:-0.062px;">Package Manager Console</div>
<div class="a s" style="left:197.00px;top:984.73px;font-size:14.5px;line-height:14.5px;color:#2D2D2D;letter-spacing:0.411px;">Output</div>
<div class="a s" style="left:258.50px;top:984.73px;font-size:14.5px;line-height:14.5px;color:#2D2D2D;letter-spacing:-0.133px;">Error List</div>
<div class="a" style="left:8px;top:1005px;width:174px;height:8px;background:#CDCED6;"></div>
<div class="a" style="left:197px;top:1005px;width:46px;height:8px;background:#CDCED6;"></div>
<div class="a" style="left:258px;top:1005px;width:58px;height:8px;background:#CDCED6;"></div>
<div class="a s" style="left:366.40px;top:134.73px;font-size:14.5px;line-height:14.5px;color:#1E1E1E;letter-spacing:-0.348px;">GamerH.cs</div>
<svg class="a" style="left:452px;top:136px;" width="9" height="12" viewBox="0 0 9 12"><path d="M1.5,0.8 H7.5 M2.5,0.8 V6.5 M6.5,0.8 V6.5 M0,6.5 H9 M4.5,6.5 V11.5" stroke="#717171" stroke-width="1.2" fill="none"/></svg>
<div class="a s" style="left:501.30px;top:134.73px;font-size:14.5px;line-height:14.5px;color:#1E1E1E;letter-spacing:-0.017px;">GamerHComparer.cs</div>
<svg class="a" style="left:652px;top:136px;" width="9" height="12" viewBox="0 0 9 12"><path d="M1.5,0.8 H7.5 M2.5,0.8 V6.5 M6.5,0.8 V6.5 M0,6.5 H9 M4.5,6.5 V11.5" stroke="#717171" stroke-width="1.2" fill="none"/></svg>
<div class="a s" style="left:702.00px;top:134.73px;font-size:14.5px;line-height:14.5px;color:#1E1E1E;letter-spacing:-0.280px;">GamerPowerH.cs</div>
<svg class="a" style="left:827px;top:136px;" width="9" height="12" viewBox="0 0 9 12"><path d="M1.5,0.8 H7.5 M2.5,0.8 V6.5 M6.5,0.8 V6.5 M0,6.5 H9 M4.5,6.5 V11.5" stroke="#717171" stroke-width="1.2" fill="none"/></svg>
<div class="a s" style="left:877.00px;top:134.73px;font-size:14.5px;line-height:14.5px;color:#1E1E1E;letter-spacing:-0.072px;">GamerPowerHComparer.cs</div>
<svg class="a" style="left:1068px;top:136px;" width="9" height="12" viewBox="0 0 9 12"><path d="M1.5,0.8 H7.5 M2.5,0.8 V6.5 M6.5,0.8 V6.5 M0,6.5 H9 M4.5,6.5 V11.5" stroke="#717171" stroke-width="1.2" fill="none"/></svg>
<div class="a s" style="left:1118.00px;top:134.73px;font-size:14.5px;line-height:14.5px;color:#1E1E1E;letter-spacing:-0.058px;">GamerMagicPowerH.cs</div>
<svg class="a" style="left:1284px;top:136px;" width="9" height="12" viewBox="0 0 9 12"><path d="M1.5,0.8 H7.5 M2.5,0.8 V6.5 M6.5,0.8 V6.5 M0,6.5 H9 M4.5,6.5 V11.5" stroke="#717171" stroke-width="1.2" fill="none"/></svg>
<div class="a" style="left:360px;top:155px;width:325px;height:25px;background:#007ACC;"></div>
<div class="a s" style="left:365.50px;top:160.73px;font-size:14.5px;line-height:14.5px;color:#FFFFFF;letter-spacing:-0.077px;">S1101ObjectCollect...areToOtherClass.cs</div>
<svg class="a" style="left:643px;top:162px;" width="9" height="12" viewBox="0 0 9 12"><path d="M1.5,0.8 H7.5 M2.5,0.8 V6.5 M6.5,0.8 V6.5 M0,6.5 H9 M4.5,6.5 V11.5" stroke="#FFFFFF" stroke-width="1.2" fill="none"/></svg>
<svg class="a" style="left:666px;top:162px;" width="13" height="13" viewBox="0 0 13 13"><path d="M1,1 L12,12 M12,1 L1,12" stroke="#fff" stroke-width="1.6"/></svg>
<div class="a" style="left:360px;top:180px;width:1204px;height:2px;background:#007ACC;"></div>
<svg class="a" style="left:1551px;top:166px;" width="10" height="6" viewBox="0 0 10 6"><path d="M0,0 H10 L5,5.5 Z" fill="#717171"/></svg>
<div class="a" style="left:360px;top:182px;width:1204px;height:26px;background:#FFFFFF;"></div>
<div class="a" style="left:360px;top:206.8px;width:1204px;height:1.6px;background:#C4C5CC;"></div>
<div class="a" style="left:758px;top:182px;width:6px;height:25px;background:#D6D7DF;"></div>
<div class="a" style="left:1161px;top:182px;width:5px;height:25px;background:#D6D7DF;"></div>
<svg class="a" style="left:365px;top:187px;" width="18" height="16" viewBox="0 0 18 16"><rect x="0.75" y="0.75" width="16.5" height="14.5" fill="#fff" stroke="#5E9E5E" stroke-width="1.5"/><text x="2.5" y="12" font-family="Liberation Sans" font-size="10" font-weight="700" fill="#424242">C#</text></svg>
<div class="a s" style="left:386.50px;top:189.23px;font-size:14.5px;line-height:14.5px;color:#1E1E1E;letter-spacing:0.020px;">OnlineGame.NUnit</div>
<svg class="a" style="left:746.5px;top:193.5px;" width="8" height="5" viewBox="0 0 8 5"><path d="M0,0 H8 L4,4 Z" fill="#717171"/></svg>
<svg class="a" style="left:768px;top:186px;" width="18" height="18" viewBox="0 0 18 18"><path d="M1,5 L5,1 L9,5 L5,9 Z" fill="#D98A1E"/><path d="M6,8 V15 H11" stroke="#D98A1E" stroke-width="1.6" fill="none"/><path d="M10,11 L14,7 L17,10 L14,14 L12,16 Z" fill="#D98A1E"/></svg>
<div class="a s" style="left:789.50px;top:189.23px;font-size:14.5px;line-height:14.5px;color:#1E1E1E;letter-spacing:0.085px;">OnlineGame.NUnit.S1101ObjectCollectionAssertionEq</div>
<svg class="a" style="left:1149.5px;top:193.5px;" width="8" height="5" viewBox="0 0 8 5"><path d="M0,0 H8 L4,4 Z" fill="#717171"/></svg>
<svg class="a" style="left:1171px;top:186px;" width="22" height="20" viewBox="0 0 22 20"><path d="M1,6 L9,2 L16,5 L16,10 L8,14 L1,11 Z" fill="#00539C"/><path d="M1,6 L8,9.5 L16,5" stroke="#DCE8F4" stroke-width="1" fill="none"/><rect x="11" y="14" width="6" height="5" fill="#424242"/><path d="M12,14 V12 C12,10 16,10 16,12 V14" stroke="#424242" stroke-width="1.2" fill="none"/></svg>
<div class="a s" style="left:1192.00px;top:189.23px;font-size:14.5px;line-height:14.5px;color:#1E1E1E;letter-spacing:-0.236px;">_gamerPower1</div>
<svg class="a" style="left:1552px;top:193.5px;" width="8" height="5" viewBox="0 0 8 5"><path d="M0,0 H8 L4,4 Z" fill="#717171"/></svg>
<div class="a" style="left:360px;top:208px;width:1171px;height:744px;background:#FFFFFF;"></div>
<div class="a" style="left:360px;top:208px;width:25px;height:744px;background:#E6E7E9;"></div>
<div class="a" style="left:465px;top:208px;width:8px;height:743px;background:#5FDC68;"></div>
<div class="a" style="left:484px;top:208px;width:1.3px;height:29px;background:#A5A5A5;"></div>
<div class="a" style="left:484px;top:250px;width:1.3px;height:701px;background:#A5A5A5;"></div>
<svg class="a" style="left:477px;top:237px;" width="13" height="13" viewBox="0 0 13 13"><rect x="0.75" y="0.75" width="11.5" height="11.5" fill="#fff" stroke="#A5A5A5" stroke-width="1.3"/><path d="M3,6.5 H10" stroke="#3C3C3C" stroke-width="1.4"/></svg>
<div class="a" style="left:496px;top:208px;width:1px;height:743px;background:repeating-linear-gradient(to bottom,#C8C8C8 0,#C8C8C8 4px,transparent 4px,transparent 8px)"></div>
<div class="a" style="left:538px;top:208px;width:1px;height:743px;background:repeating-linear-gradient(to bottom,#C8C8C8 0,#C8C8C8 4px,transparent 4px,transparent 8px)"></div>
<div class="a" style="left:1531px;top:208px;width:33px;height:744px;background:#F4F4F5;"></div>
<div class="a" style="left:1531px;top:229.5px;width:33px;height:1px;background:#DADADA;"></div>
<svg class="a" style="left:1539px;top:210px;" width="16" height="18" viewBox="0 0 16 18"><path d="M1,8.5 H15 M1,11 H15" stroke="#1E1E1E" stroke-width="1.4"/><path d="M8,1 V7 M8,12.5 V17" stroke="#1E1E1E" stroke-width="1.3"/><path d="M5.5,3.5 L8,1 L10.5,3.5 M5.5,14.5 L8,17 L10.5,14.5" stroke="#1E1E1E" stroke-width="1.3" fill="none"/></svg>
<svg class="a" style="left:1539px;top:231px;" width="16" height="15" viewBox="0 0 16 15"><path d="M8,0.5 L15.5,14.5 H0.5 Z" fill="#F6A623" stroke="#F6A623" stroke-linejoin="round"/><rect x="7.2" y="5" width="1.6" height="5" fill="#3C3C3C"/><rect x="7.2" y="11" width="1.6" height="1.6" fill="#3C3C3C"/></svg>
<svg class="a" style="left:1542px;top:256px;" width="11" height="7" viewBox="0 0 11 7"><path d="M0,6.5 L5.5,0.5 L11,6.5 Z" fill="#868999"/></svg>
<div class="a" style="left:1552px;top:273.5px;width:12px;height:2.5px;background:#F2A21F;"></div>
<div class="a" style="left:1552px;top:278px;width:12px;height:2.5px;background:#F2A21F;"></div>
<div class="a" style="left:1531px;top:299px;width:5px;height:503px;background:#5FDC68;"></div>
<div class="a" style="left:1536px;top:299px;width:23px;height:166px;background:#C9C9CD;"></div>
<div class="a" style="left:1552px;top:305px;width:12px;height:480px;background:#FAF1DE;"></div>
<div class="a" style="left:1545.5px;top:311.5px;width:6px;height:479px;background:#A7A7A9;"></div>
<div class="a" style="left:1552px;top:309.5px;width:12px;height:2.5px;background:#F2A21F;"></div>
<div class="a" style="left:1552px;top:317px;width:12px;height:2.5px;background:#F2A21F;"></div>
<div class="a" style="left:1552px;top:323.5px;width:12px;height:2.5px;background:#F2A21F;"></div>
<div class="a" style="left:1552px;top:333px;width:12px;height:2.5px;background:#F2A21F;"></div>
<div class="a" style="left:1552px;top:340.45px;width:12px;height:2.5px;background:#F2A21F;"></div>
<div class="a" style="left:1552px;top:347.9px;width:12px;height:2.5px;background:#F2A21F;"></div>
<div class="a" style="left:1552px;top:355.34999999999997px;width:12px;height:2.5px;background:#F2A21F;"></div>
<div class="a" style="left:1552px;top:362.79999999999995px;width:12px;height:2.5px;background:#F2A21F;"></div>
<div class="a" style="left:1552px;top:370.24999999999994px;width:12px;height:2.5px;background:#F2A21F;"></div>
<div class="a" style="left:1552px;top:377.69999999999993px;width:12px;height:2.5px;background:#F2A21F;"></div>
<div class="a" style="left:1552px;top:385.1499999999999px;width:12px;height:2.5px;background:#F2A21F;"></div>
<div class="a" style="left:1552px;top:392.5999999999999px;width:12px;height:2.5px;background:#F2A21F;"></div>
<div class="a" style="left:1552px;top:400.0499999999999px;width:12px;height:2.5px;background:#F2A21F;"></div>
<div class="a" style="left:1552px;top:407.4999999999999px;width:12px;height:2.5px;background:#F2A21F;"></div>
<div class="a" style="left:1552px;top:414.9499999999999px;width:12px;height:2.5px;background:#F2A21F;"></div>
<div class="a" style="left:1552px;top:422.39999999999986px;width:12px;height:2.5px;background:#F2A21F;"></div>
<div class="a" style="left:1552px;top:429.84999999999985px;width:12px;height:2.5px;background:#F2A21F;"></div>
<div class="a" style="left:1552px;top:437.29999999999984px;width:12px;height:2.5px;background:#F2A21F;"></div>
<div class="a" style="left:1552px;top:444.74999999999983px;width:12px;height:2.5px;background:#F2A21F;"></div>
<div class="a" style="left:1552px;top:452.1999999999998px;width:12px;height:2.5px;background:#F2A21F;"></div>
<div class="a" style="left:1552px;top:459.6499999999998px;width:12px;height:2.5px;background:#F2A21F;"></div>
<div class="a" style="left:1552px;top:467.0999999999998px;width:12px;height:2.5px;background:#F2A21F;"></div>
<div class="a" style="left:1552px;top:474.5499999999998px;width:12px;height:2.5px;background:#F2A21F;"></div>
<div class="a" style="left:1552px;top:481.9999999999998px;width:12px;height:2.5px;background:#F2A21F;"></div>
<div class="a" style="left:1552px;top:489.44999999999976px;width:12px;height:2.5px;background:#F2A21F;"></div>
<div class="a" style="left:1552px;top:496.89999999999975px;width:12px;height:2.5px;background:#F2A21F;"></div>
<div class="a" style="left:1552px;top:504.34999999999974px;width:12px;height:2.5px;background:#F2A21F;"></div>
<div class="a" style="left:1552px;top:511.7999999999997px;width:12px;height:2.5px;background:#F2A21F;"></div>
<div class="a" style="left:1552px;top:519.2499999999998px;width:12px;height:2.5px;background:#F2A21F;"></div>
<div class="a" style="left:1552px;top:526.6999999999998px;width:12px;height:2.5px;background:#F2A21F;"></div>
<div class="a" style="left:1552px;top:534.1499999999999px;width:12px;height:2.5px;background:#F2A21F;"></div>
<div class="a" style="left:1552px;top:541.5999999999999px;width:12px;height:2.5px;background:#F2A21F;"></div>
<div class="a" style="left:1552px;top:549.05px;width:12px;height:2.5px;background:#F2A21F;"></div>
<div class="a" style="left:1552px;top:556.5px;width:12px;height:2.5px;background:#F2A21F;"></div>
<div class="a" style="left:1552px;top:563.95px;width:12px;height:2.5px;background:#F2A21F;"></div>
<div class="a" style="left:1552px;top:571.4000000000001px;width:12px;height:2.5px;background:#F2A21F;"></div>
<div class="a" style="left:1552px;top:578.8500000000001px;width:12px;height:2.5px;background:#F2A21F;"></div>
<div class="a" style="left:1552px;top:586.3000000000002px;width:12px;height:2.5px;background:#F2A21F;"></div>
<div class="a" style="left:1552px;top:593.7500000000002px;width:12px;height:2.5px;background:#F2A21F;"></div>
<div class="a" style="left:1552px;top:601.2000000000003px;width:12px;height:2.5px;background:#F2A21F;"></div>
<div class="a" style="left:1552px;top:608.6500000000003px;width:12px;height:2.5px;background:#F2A21F;"></div>
<div class="a" style="left:1552px;top:616.1000000000004px;width:12px;height:2.5px;background:#F2A21F;"></div>
<div class="a" style="left:1552px;top:623.5500000000004px;width:12px;height:2.5px;background:#F2A21F;"></div>
<div class="a" style="left:1552px;top:631.0000000000005px;width:12px;height:2.5px;background:#F2A21F;"></div>
<div class="a" style="left:1552px;top:638.4500000000005px;width:12px;height:2.5px;background:#F2A21F;"></div>
<div class="a" style="left:1552px;top:645.9000000000005px;width:12px;height:2.5px;background:#F2A21F;"></div>
<div class="a" style="left:1552px;top:653.3500000000006px;width:12px;height:2.5px;background:#F2A21F;"></div>
<div class="a" style="left:1552px;top:660.8000000000006px;width:12px;height:2.5px;background:#F2A21F;"></div>
<div class="a" style="left:1552px;top:668.2500000000007px;width:12px;height:2.5px;background:#F2A21F;"></div>
<div class="a" style="left:1552px;top:675.7000000000007px;width:12px;height:2.5px;background:#F2A21F;"></div>
<div class="a" style="left:1552px;top:683.1500000000008px;width:12px;height:2.5px;background:#F2A21F;"></div>
<div class="a" style="left:1552px;top:690.6000000000008px;width:12px;height:2.5px;background:#F2A21F;"></div>
<div class="a" style="left:1552px;top:698.0500000000009px;width:12px;height:2.5px;background:#F2A21F;"></div>
<div class="a" style="left:1552px;top:705.5000000000009px;width:12px;height:2.5px;background:#F2A21F;"></div>
<div class="a" style="left:1552px;top:712.950000000001px;width:12px;height:2.5px;background:#F2A21F;"></div>
<div class="a" style="left:1552px;top:720.400000000001px;width:12px;height:2.5px;background:#F2A21F;"></div>
<div class="a" style="left:1552px;top:727.850000000001px;width:12px;height:2.5px;background:#F2A21F;"></div>
<div class="a" style="left:1552px;top:735.3000000000011px;width:12px;height:2.5px;background:#F2A21F;"></div>
<div class="a" style="left:1552px;top:742.7500000000011px;width:12px;height:2.5px;background:#F2A21F;"></div>
<div class="a" style="left:1552px;top:750.2000000000012px;width:12px;height:2.5px;background:#F2A21F;"></div>
<div class="a" style="left:1552px;top:757.6500000000012px;width:12px;height:2.5px;background:#F2A21F;"></div>
<div class="a" style="left:1552px;top:765.1000000000013px;width:12px;height:2.5px;background:#F2A21F;"></div>
<div class="a" style="left:1552px;top:772.5500000000013px;width:12px;height:2.5px;background:#F2A21F;"></div>
<div class="a" style="left:1552px;top:780.0000000000014px;width:12px;height:2.5px;background:#F2A21F;"></div>
<div class="a" style="left:1531px;top:327.5px;width:33px;height:2.8px;background:#0A0AA0;"></div>
<svg class="a" style="left:1542px;top:938px;" width="12" height="6" viewBox="0 0 12 6"><path d="M0,0 H11 L5.5,5.5 Z" fill="#868999"/></svg>
<div class="a" style="left:1564px;top:208px;width:9px;height:765px;background:#EEEEF2;"></div>
<div class="a" style="left:1564px;top:182px;width:1px;height:792px;background:#D0D1D8;"></div>
<div class="a" style="left:359px;top:182px;width:1px;height:792px;background:#D0D1D8;"></div>
<div class="a" style="left:784.2px;top:304.2px;width:126px;height:25.4px;background:#93BEE0;"></div>
<div class="a m" style="left:441.40px;top:210.02px;font-size:17.4px;line-height:17.4px;color:#3A8DAB;">84</div>
<div class="a m code" style="left:575.3px;top:209.42px"><span style="color:#008000">// ====== Begin of GlobalVariable ======</span></div>
<div class="a m" style="left:441.40px;top:234.88px;font-size:17.4px;line-height:17.4px;color:#3A8DAB;">85</div>
<div class="a m code" style="left:575.3px;top:234.28px"><span style="color:#808080">#region</span><span style="color:#000000"> GlobalVariable</span></div>
<div class="a m" style="left:441.40px;top:259.74px;font-size:17.4px;line-height:17.4px;color:#3A8DAB;">86</div>
<div class="a m code" style="left:575.3px;top:259.14px"><span style="color:#1B1BA6">private</span><span style="color:#000"> </span><span style="color:#2D8CAB">GamerPowerHComparer</span><span style="color:#000"> </span><span style="color:#8A8A8A">_gamerPowerComparer</span><span style="color:#000">;</span></div>
<div class="a m" style="left:441.40px;top:284.60px;font-size:17.4px;line-height:17.4px;color:#3A8DAB;">87</div>
<div class="a m code" style="left:575.3px;top:284.00px"><span style="color:#1B1BA6">private</span><span style="color:#000"> </span><span style="color:#2D8CAB">GamerHComparer</span><span style="color:#000"> </span><span style="color:#8A8A8A">_gamerComparer</span><span style="color:#000">;</span></div>
<div class="a m" style="left:441.40px;top:309.46px;font-size:17.4px;line-height:17.4px;color:#3A8DAB;">88</div>
<div class="a m code" style="left:575.3px;top:308.86px"><span style="color:#1B1BA6">private</span><span style="color:#000"> </span><span style="color:#2D8CAB">GamerPowerH</span><span style="color:#000"> </span><span style="color:#8A8A8A">_gamerPower1</span><span style="color:#000">;</span></div>
<div class="a m" style="left:441.40px;top:334.32px;font-size:17.4px;line-height:17.4px;color:#3A8DAB;">89</div>
<div class="a m code" style="left:575.3px;top:333.72px"><span style="color:#1B1BA6">private</span><span style="color:#000"> </span><span style="color:#2D8CAB">GamerMagicPowerH</span><span style="color:#000"> </span><span style="color:#8A8A8A">_gamerMagicPower1</span><span style="color:#000">;</span></div>
<div class="a m" style="left:441.40px;top:359.18px;font-size:17.4px;line-height:17.4px;color:#3A8DAB;">90</div>
<div class="a m code" style="left:575.3px;top:358.58px"><span style="color:#1B1BA6">private</span><span style="color:#000"> </span><span style="color:#2D8CAB">GamerH</span><span style="color:#000"> </span><span style="color:#8A8A8A">_gamer1</span><span style="color:#000">;</span></div>
<div class="a m" style="left:441.40px;top:384.04px;font-size:17.4px;line-height:17.4px;color:#3A8DAB;">91</div>
<div class="a m code" style="left:575.3px;top:383.44px"><span style="color:#1B1BA6">private</span><span style="color:#000"> </span><span style="color:#2D8CAB">GamerPowerH</span><span style="color:#000"> </span><span style="color:#8A8A8A">_gamerPower2</span><span style="color:#000">;</span></div>
<div class="a m" style="left:441.40px;top:408.90px;font-size:17.4px;line-height:17.4px;color:#3A8DAB;">92</div>
<div class="a m code" style="left:575.3px;top:408.30px"><span style="color:#1B1BA6">private</span><span style="color:#000"> </span><span style="color:#2D8CAB">GamerMagicPowerH</span><span style="color:#000"> </span><span style="color:#8A8A8A">_gamerMagicPower2</span><span style="color:#000">;</span></div>
<div class="a m" style="left:441.40px;top:433.76px;font-size:17.4px;line-height:17.4px;color:#3A8DAB;">93</div>
<div class="a m code" style="left:575.3px;top:433.16px"><span style="color:#1B1BA6">private</span><span style="color:#000"> </span><span style="color:#2D8CAB">GamerH</span><span style="color:#000"> </span><span style="color:#8A8A8A">_gamer2</span><span style="color:#000">;</span></div>
<div class="a m" style="left:441.40px;top:458.62px;font-size:17.4px;line-height:17.4px;color:#3A8DAB;">94</div>
<div class="a m code" style="left:575.3px;top:458.02px"><span style="color:#1B1BA6">private</span><span style="color:#000"> </span><span style="color:#2D8CAB">GamerPowerH</span><span style="color:#000"> </span><span style="color:#8A8A8A">_gamerPower3</span><span style="color:#000">;</span></div>
<div class="a m" style="left:441.40px;top:483.48px;font-size:17.4px;line-height:17.4px;color:#3A8DAB;">95</div>
<div class="a m code" style="left:575.3px;top:482.88px"><span style="color:#1B1BA6">private</span><span style="color:#000"> </span><span style="color:#2D8CAB">GamerMagicPowerH</span><span style="color:#000"> </span><span style="color:#8A8A8A">_gamerMagicPower3</span><span style="color:#000">;</span></div>
<div class="a m" style="left:441.40px;top:508.34px;font-size:17.4px;line-height:17.4px;color:#3A8DAB;">96</div>
<div class="a m code" style="left:575.3px;top:507.74px"><span style="color:#1B1BA6">private</span><span style="color:#000"> </span><span style="color:#2D8CAB">GamerH</span><span style="color:#000"> </span><span style="color:#8A8A8A">_gamer3</span><span style="color:#000">;</span></div>
<div class="a m" style="left:441.40px;top:533.20px;font-size:17.4px;line-height:17.4px;color:#3A8DAB;">97</div>
<div class="a m code" style="left:575.3px;top:532.60px"><span style="color:#1B1BA6">private</span><span style="color:#000"> </span><span style="color:#2D8CAB">GamerPowerH</span><span style="color:#000"> </span><span style="color:#8A8A8A">_gamerPower4</span><span style="color:#000">;</span></div>
<div class="a m" style="left:441.40px;top:558.06px;font-size:17.4px;line-height:17.4px;color:#3A8DAB;">98</div>
<div class="a m code" style="left:575.3px;top:557.46px"><span style="color:#1B1BA6">private</span><span style="color:#000"> </span><span style="color:#2D8CAB">GamerMagicPowerH</span><span style="color:#000"> </span><span style="color:#8A8A8A">_gamerMagicPower4</span><span style="color:#000">;</span></div>
<div class="a m" style="left:441.40px;top:582.92px;font-size:17.4px;line-height:17.4px;color:#3A8DAB;">99</div>
<div class="a m code" style="left:575.3px;top:582.32px"><span style="color:#1B1BA6">private</span><span style="color:#000"> </span><span style="color:#2D8CAB">GamerH</span><span style="color:#000"> </span><span style="color:#8A8A8A">_gamer4</span><span style="color:#000">;</span></div>
<div class="a m" style="left:430.95px;top:607.78px;font-size:17.4px;line-height:17.4px;color:#3A8DAB;">100</div>
<div class="a m code" style="left:575.3px;top:607.18px"><span style="color:#1B1BA6">private</span><span style="color:#000"> </span><span style="color:#2D8CAB">GamerPowerH</span><span style="color:#000"> </span><span style="color:#8A8A8A">_gamerPower5</span><span style="color:#000">;</span></div>
<div class="a m" style="left:430.95px;top:632.64px;font-size:17.4px;line-height:17.4px;color:#3A8DAB;">101</div>
<div class="a m code" style="left:575.3px;top:632.04px"><span style="color:#1B1BA6">private</span><span style="color:#000"> </span><span style="color:#2D8CAB">GamerMagicPowerH</span><span style="color:#000"> </span><span style="color:#8A8A8A">_gamerMagicPower5</span><span style="color:#000">;</span></div>
<div class="a m" style="left:430.95px;top:657.50px;font-size:17.4px;line-height:17.4px;color:#3A8DAB;">102</div>
<div class="a m code" style="left:575.3px;top:656.90px"><span style="color:#1B1BA6">private</span><span style="color:#000"> </span><span style="color:#2D8CAB">GamerH</span><span style="color:#000"> </span><span style="color:#8A8A8A">_gamer5</span><span style="color:#000">;</span></div>
<div class="a m" style="left:430.95px;top:682.36px;font-size:17.4px;line-height:17.4px;color:#3A8DAB;">103</div>
<div class="a m code" style="left:575.3px;top:681.76px"><span style="color:#1B1BA6">private</span><span style="color:#000"> </span><span style="color:#2D8CAB">GamerPowerH</span><span style="color:#000"> </span><span style="color:#8A8A8A">_gamerPower1V2</span><span style="color:#000">;</span></div>
<div class="a m" style="left:430.95px;top:707.22px;font-size:17.4px;line-height:17.4px;color:#3A8DAB;">104</div>
<div class="a m code" style="left:575.3px;top:706.62px"><span style="color:#1B1BA6">private</span><span style="color:#000"> </span><span style="color:#2D8CAB">GamerMagicPowerH</span><span style="color:#000"> </span><span style="color:#8A8A8A">_gamerMagicPower1V2</span><span style="color:#000">;</span></div>
<div class="a m" style="left:430.95px;top:732.08px;font-size:17.4px;line-height:17.4px;color:#3A8DAB;">105</div>
<div class="a m code" style="left:575.3px;top:731.48px"><span style="color:#1B1BA6">private</span><span style="color:#000"> </span><span style="color:#2D8CAB">GamerH</span><span style="color:#000"> </span><span style="color:#8A8A8A">_gamer1V2</span><span style="color:#000">;</span></div>
<div class="a m" style="left:430.95px;top:756.94px;font-size:17.4px;line-height:17.4px;color:#3A8DAB;">106</div>
<div class="a m code" style="left:575.3px;top:756.34px"><span style="color:#1B1BA6">private</span><span style="color:#000"> </span><span style="color:#2D8CAB">GamerPowerH</span><span style="color:#000"> </span><span style="color:#8A8A8A">_gamerPower2V2</span><span style="color:#000">;</span></div>
<div class="a m" style="left:430.95px;top:781.80px;font-size:17.4px;line-height:17.4px;color:#3A8DAB;">107</div>
<div class="a m code" style="left:575.3px;top:781.20px"><span style="color:#1B1BA6">private</span><span style="color:#000"> </span><span style="color:#2D8CAB">GamerMagicPowerH</span><span style="color:#000"> </span><span style="color:#8A8A8A">_gamerMagicPower2V2</span><span style="color:#000">;</span></div>
<div class="a m" style="left:430.95px;top:806.66px;font-size:17.4px;line-height:17.4px;color:#3A8DAB;">108</div>
<div class="a m code" style="left:575.3px;top:806.06px"><span style="color:#1B1BA6">private</span><span style="color:#000"> </span><span style="color:#2D8CAB">GamerH</span><span style="color:#000"> </span><span style="color:#8A8A8A">_gamer2V2</span><span style="color:#000">;</span></div>
<div class="a m" style="left:430.95px;top:831.52px;font-size:17.4px;line-height:17.4px;color:#3A8DAB;">109</div>
<div class="a m code" style="left:575.3px;top:830.92px"><span style="color:#1B1BA6">private</span><span style="color:#000"> </span><span style="color:#2D8CAB">GamerPowerH</span><span style="color:#000"> </span><span style="color:#8A8A8A">_gamerPower3V2</span><span style="color:#000">;</span></div>
<div class="a m" style="left:430.95px;top:856.38px;font-size:17.4px;line-height:17.4px;color:#3A8DAB;">110</div>
<div class="a m code" style="left:575.3px;top:855.78px"><span style="color:#1B1BA6">private</span><span style="color:#000"> </span><span style="color:#2D8CAB">GamerMagicPowerH</span><span style="color:#000"> </span><span style="color:#8A8A8A">_gamerMagicPower3V2</span><span style="color:#000">;</span></div>
<div class="a m" style="left:430.95px;top:881.24px;font-size:17.4px;line-height:17.4px;color:#3A8DAB;">111</div>
<div class="a m code" style="left:575.3px;top:880.64px"><span style="color:#1B1BA6">private</span><span style="color:#000"> </span><span style="color:#2D8CAB">GamerH</span><span style="color:#000"> </span><span style="color:#8A8A8A">_gamer3V2</span><span style="color:#000">;</span></div>
<div class="a m" style="left:430.95px;top:906.10px;font-size:17.4px;line-height:17.4px;color:#3A8DAB;">112</div>
<div class="a m code" style="left:575.3px;top:905.50px"><span style="color:#1B1BA6">private</span><span style="color:#000"> </span><span style="color:#2D8CAB">GamerPowerH</span><span style="color:#000"> </span><span style="color:#8A8A8A">_gamerPower4V2</span><span style="color:#000">;</span></div>
<div class="a m" style="left:430.95px;top:930.96px;font-size:17.4px;line-height:17.4px;color:#3A8DAB;">113</div>
<div class="a m code" style="left:575.3px;top:930.36px"><span style="color:#1B1BA6">private</span><span style="color:#000"> </span><span style="color:#2D8CAB">GamerMagicPowerH</span><span style="color:#000"> </span><span style="color:#8A8A8A">_gamerMagicPower4V2</span><span style="color:#000">;</span></div>
<svg class="a" style="left:0;top:0" width="1920" height="1080" viewBox="0 0 1920 1080"><polyline points="867.90,275.07 871.72,278.87 875.54,275.07 879.35,278.87 883.17,275.07 886.99,278.87 890.81,275.07 894.63,278.87 898.45,275.07 902.26,278.87 906.08,275.07 909.90,278.87 913.72,275.07 917.54,278.87 921.36,275.07 925.17,278.87 928.99,275.07 932.81,278.87 936.63,275.07 940.45,278.87 944.27,275.07 948.08,278.87 951.90,275.07 955.72,278.87 959.54,275.07 963.36,278.87 967.17,275.07 970.99,278.87 974.81,275.07 978.63,278.87 982.45,275.07 986.27,278.87 990.08,275.07 993.90,278.87 997.72,275.07 1001.54,278.87 1005.36,275.07 1009.18,278.87 1012.99,275.07 1016.81,278.87 1020.63,275.07 1024.45,278.87 1028.27,275.07 1032.09,278.87 1035.90,275.07 1039.72,278.87 1043.54,275.07 1047.36,278.87 1051.18,275.07 1055.00,278.87 1058.81,275.07 1062.63,278.87 1066.45,275.07" fill="none" stroke="#6E6ED2" stroke-width="1.3" stroke-linejoin="round"/><polyline points="815.65,299.93 819.50,303.73 823.35,299.93 827.20,303.73 831.05,299.93 834.90,303.73 838.75,299.93 842.60,303.73 846.45,299.93 850.30,303.73 854.15,299.93 858.00,303.73 861.85,299.93 865.70,303.73 869.55,299.93 873.40,303.73 877.25,299.93 881.10,303.73 884.95,299.93 888.80,303.73 892.65,299.93 896.50,303.73 900.35,299.93 904.20,303.73 908.05,299.93 911.90,303.73 915.75,299.93 919.60,303.73 923.45,299.93 927.30,303.73 931.15,299.93 935.00,303.73 938.85,299.93 942.70,303.73 946.55,299.93 950.40,303.73 954.25,299.93 958.10,303.73 961.95,299.93" fill="none" stroke="#6E6ED2" stroke-width="1.3" stroke-linejoin="round"/><polyline points="784.30,324.79 788.10,328.59 791.90,324.79 795.70,328.59 799.50,324.79 803.30,328.59 807.10,324.79 810.90,328.59 814.70,324.79 818.50,328.59 822.30,324.79 826.10,328.59 829.90,324.79 833.70,328.59 837.50,324.79 841.30,328.59 845.10,324.79 848.90,328.59 852.70,324.79 856.50,328.59 860.30,324.79 864.10,328.59 867.90,324.79 871.70,328.59 875.50,324.79 879.30,328.59 883.10,324.79 886.90,328.59 890.70,324.79 894.50,328.59 898.30,324.79 902.10,328.59 905.90,324.79 909.70,328.59" fill="none" stroke="#2030D0" stroke-width="1.6" stroke-linejoin="round"/><polyline points="836.55,349.65 840.33,353.45 844.11,349.65 847.89,353.45 851.67,349.65 855.45,353.45 859.23,349.65 863.01,353.45 866.79,349.65 870.57,353.45 874.35,349.65 878.13,353.45 881.91,349.65 885.69,353.45 889.47,349.65 893.25,353.45 897.03,349.65 900.81,353.45 904.59,349.65 908.37,353.45 912.15,349.65 915.93,353.45 919.71,349.65 923.49,353.45 927.26,349.65 931.04,353.45 934.82,349.65 938.60,353.45 942.38,349.65 946.16,353.45 949.94,349.65 953.72,353.45 957.50,349.65 961.28,353.45 965.06,349.65 968.84,353.45 972.62,349.65 976.40,353.45 980.18,349.65 983.96,353.45 987.74,349.65 991.52,353.45 995.30,349.65 999.08,353.45 1002.86,349.65 1006.64,353.45 1010.42,349.65 1014.20,353.45" fill="none" stroke="#6E6ED2" stroke-width="1.3" stroke-linejoin="round"/><polyline points="732.05,374.51 735.90,378.31 739.75,374.51 743.60,378.31 747.45,374.51 751.30,378.31 755.15,374.51 759.00,378.31 762.85,374.51 766.70,378.31 770.55,374.51 774.40,378.31 778.25,374.51 782.10,378.31 785.95,374.51 789.80,378.31 793.65,374.51 797.50,378.31 801.35,374.51 805.20,378.31" fill="none" stroke="#6E6ED2" stroke-width="1.3" stroke-linejoin="round"/><polyline points="784.30,399.37 788.10,403.17 791.90,399.37 795.70,403.17 799.50,399.37 803.30,403.17 807.10,399.37 810.90,403.17 814.70,399.37 818.50,403.17 822.30,399.37 826.10,403.17 829.90,399.37 833.70,403.17 837.50,399.37 841.30,403.17 845.10,399.37 848.90,403.17 852.70,399.37 856.50,403.17 860.30,399.37 864.10,403.17 867.90,399.37 871.70,403.17 875.50,399.37 879.30,403.17 883.10,399.37 886.90,403.17 890.70,399.37 894.50,403.17 898.30,399.37 902.10,403.17 905.90,399.37 909.70,403.17" fill="none" stroke="#6E6ED2" stroke-width="1.3" stroke-linejoin="round"/><polyline points="836.55,424.23 840.33,428.03 844.11,424.23 847.89,428.03 851.67,424.23 855.45,428.03 859.23,424.23 863.01,428.03 866.79,424.23 870.57,428.03 874.35,424.23 878.13,428.03 881.91,424.23 885.69,428.03 889.47,424.23 893.25,428.03 897.03,424.23 900.81,428.03 904.59,424.23 908.37,428.03 912.15,424.23 915.93,428.03 919.71,424.23 923.49,428.03 927.26,424.23 931.04,428.03 934.82,424.23 938.60,428.03 942.38,424.23 946.16,428.03 949.94,424.23 953.72,428.03 957.50,424.23 961.28,428.03 965.06,424.23 968.84,428.03 972.62,424.23 976.40,428.03 980.18,424.23 983.96,428.03 987.74,424.23 991.52,428.03 995.30,424.23 999.08,428.03 1002.86,424.23 1006.64,428.03 1010.42,424.23 1014.20,428.03" fill="none" stroke="#6E6ED2" stroke-width="1.3" stroke-linejoin="round"/><polyline points="732.05,449.09 735.90,452.89 739.75,449.09 743.60,452.89 747.45,449.09 751.30,452.89 755.15,449.09 759.00,452.89 762.85,449.09 766.70,452.89 770.55,449.09 774.40,452.89 778.25,449.09 782.10,452.89 785.95,449.09 789.80,452.89 793.65,449.09 797.50,452.89 801.35,449.09 805.20,452.89" fill="none" stroke="#6E6ED2" stroke-width="1.3" stroke-linejoin="round"/><polyline points="784.30,473.95 788.10,477.75 791.90,473.95 795.70,477.75 799.50,473.95 803.30,477.75 807.10,473.95 810.90,477.75 814.70,473.95 818.50,477.75 822.30,473.95 826.10,477.75 829.90,473.95 833.70,477.75 837.50,473.95 841.30,477.75 845.10,473.95 848.90,477.75 852.70,473.95 856.50,477.75 860.30,473.95 864.10,477.75 867.90,473.95 871.70,477.75 875.50,473.95 879.30,477.75 883.10,473.95 886.90,477.75 890.70,473.95 894.50,477.75 898.30,473.95 902.10,477.75 905.90,473.95 909.70,477.75" fill="none" stroke="#6E6ED2" stroke-width="1.3" stroke-linejoin="round"/><polyline points="836.55,498.81 840.33,502.61 844.11,498.81 847.89,502.61 851.67,498.81 855.45,502.61 859.23,498.81 863.01,502.61 866.79,498.81 870.57,502.61 874.35,498.81 878.13,502.61 881.91,498.81 885.69,502.61 889.47,498.81 893.25,502.61 897.03,498.81 900.81,502.61 904.59,498.81 908.37,502.61 912.15,498.81 915.93,502.61 919.71,498.81 923.49,502.61 927.26,498.81 931.04,502.61 934.82,498.81 938.60,502.61 942.38,498.81 946.16,502.61 949.94,498.81 953.72,502.61 957.50,498.81 961.28,502.61 965.06,498.81 968.84,502.61 972.62,498.81 976.40,502.61 980.18,498.81 983.96,502.61 987.74,498.81 991.52,502.61 995.30,498.81 999.08,502.61 1002.86,498.81 1006.64,502.61 1010.42,498.81 1014.20,502.61" fill="none" stroke="#6E6ED2" stroke-width="1.3" stroke-linejoin="round"/><polyline points="732.05,523.67 735.90,527.47 739.75,523.67 743.60,527.47 747.45,523.67 751.30,527.47 755.15,523.67 759.00,527.47 762.85,523.67 766.70,527.47 770.55,523.67 774.40,527.47 778.25,523.67 782.10,527.47 785.95,523.67 789.80,527.47 793.65,523.67 797.50,527.47 801.35,523.67 805.20,527.47" fill="none" stroke="#6E6ED2" stroke-width="1.3" stroke-linejoin="round"/><polyline points="784.30,548.53 788.10,552.33 791.90,548.53 795.70,552.33 799.50,548.53 803.30,552.33 807.10,548.53 810.90,552.33 814.70,548.53 818.50,552.33 822.30,548.53 826.10,552.33 829.90,548.53 833.70,552.33 837.50,548.53 841.30,552.33 845.10,548.53 848.90,552.33 852.70,548.53 856.50,552.33 860.30,548.53 864.10,552.33 867.90,548.53 871.70,552.33 875.50,548.53 879.30,552.33 883.10,548.53 886.90,552.33 890.70,548.53 894.50,552.33 898.30,548.53 902.10,552.33 905.90,548.53 909.70,552.33" fill="none" stroke="#6E6ED2" stroke-width="1.3" stroke-linejoin="round"/><polyline points="836.55,573.39 840.33,577.19 844.11,573.39 847.89,577.19 851.67,573.39 855.45,577.19 859.23,573.39 863.01,577.19 866.79,573.39 870.57,577.19 874.35,573.39 878.13,577.19 881.91,573.39 885.69,577.19 889.47,573.39 893.25,577.19 897.03,573.39 900.81,577.19 904.59,573.39 908.37,577.19 912.15,573.39 915.93,577.19 919.71,573.39 923.49,577.19 927.26,573.39 931.04,577.19 934.82,573.39 938.60,577.19 942.38,573.39 946.16,577.19 949.94,573.39 953.72,577.19 957.50,573.39 961.28,577.19 965.06,573.39 968.84,577.19 972.62,573.39 976.40,577.19 980.18,573.39 983.96,577.19 987.74,573.39 991.52,577.19 995.30,573.39 999.08,577.19 1002.86,573.39 1006.64,577.19 1010.42,573.39 1014.20,577.19" fill="none" stroke="#6E6ED2" stroke-width="1.3" stroke-linejoin="round"/><polyline points="732.05,598.25 735.90,602.05 739.75,598.25 743.60,602.05 747.45,598.25 751.30,602.05 755.15,598.25 759.00,602.05 762.85,598.25 766.70,602.05 770.55,598.25 774.40,602.05 778.25,598.25 782.10,602.05 785.95,598.25 789.80,602.05 793.65,598.25 797.50,602.05 801.35,598.25 805.20,602.05" fill="none" stroke="#6E6ED2" stroke-width="1.3" stroke-linejoin="round"/><polyline points="784.30,623.11 788.10,626.91 791.90,623.11 795.70,626.91 799.50,623.11 803.30,626.91 807.10,623.11 810.90,626.91 814.70,623.11 818.50,626.91 822.30,623.11 826.10,626.91 829.90,623.11 833.70,626.91 837.50,623.11 841.30,626.91 845.10,623.11 848.90,626.91 852.70,623.11 856.50,626.91 860.30,623.11 864.10,626.91 867.90,623.11 871.70,626.91 875.50,623.11 879.30,626.91 883.10,623.11 886.90,626.91 890.70,623.11 894.50,626.91 898.30,623.11 902.10,626.91 905.90,623.11 909.70,626.91" fill="none" stroke="#6E6ED2" stroke-width="1.3" stroke-linejoin="round"/><polyline points="836.55,647.97 840.33,651.77 844.11,647.97 847.89,651.77 851.67,647.97 855.45,651.77 859.23,647.97 863.01,651.77 866.79,647.97 870.57,651.77 874.35,647.97 878.13,651.77 881.91,647.97 885.69,651.77 889.47,647.97 893.25,651.77 897.03,647.97 900.81,651.77 904.59,647.97 908.37,651.77 912.15,647.97 915.93,651.77 919.71,647.97 923.49,651.77 927.26,647.97 931.04,651.77 934.82,647.97 938.60,651.77 942.38,647.97 946.16,651.77 949.94,647.97 953.72,651.77 957.50,647.97 961.28,651.77 965.06,647.97 968.84,651.77 972.62,647.97 976.40,651.77 980.18,647.97 983.96,651.77 987.74,647.97 991.52,651.77 995.30,647.97 999.08,651.77 1002.86,647.97 1006.64,651.77 1010.42,647.97 1014.20,651.77" fill="none" stroke="#6E6ED2" stroke-width="1.3" stroke-linejoin="round"/><polyline points="732.05,672.83 735.90,676.63 739.75,672.83 743.60,676.63 747.45,672.83 751.30,676.63 755.15,672.83 759.00,676.63 762.85,672.83 766.70,676.63 770.55,672.83 774.40,676.63 778.25,672.83 782.10,676.63 785.95,672.83 789.80,676.63 793.65,672.83 797.50,676.63 801.35,672.83 805.20,676.63" fill="none" stroke="#6E6ED2" stroke-width="1.3" stroke-linejoin="round"/><polyline points="784.30,697.69 788.15,701.49 792.00,697.69 795.85,701.49 799.70,697.69 803.55,701.49 807.40,697.69 811.25,701.49 815.10,697.69 818.95,701.49 822.80,697.69 826.65,701.49 830.50,697.69 834.35,701.49 838.20,697.69 842.05,701.49 845.90,697.69 849.75,701.49 853.60,697.69 857.45,701.49 861.30,697.69 865.15,701.49 869.00,697.69 872.85,701.49 876.70,697.69 880.55,701.49 884.40,697.69 888.25,701.49 892.10,697.69 895.95,701.49 899.80,697.69 903.65,701.49 907.50,697.69 911.35,701.49 915.20,697.69 919.05,701.49 922.90,697.69 926.75,701.49 930.60,697.69" fill="none" stroke="#2030D0" stroke-width="1.6" stroke-linejoin="round"/><polyline points="836.55,722.55 840.37,726.35 844.19,722.55 848.00,726.35 851.82,722.55 855.64,726.35 859.46,722.55 863.28,726.35 867.10,722.55 870.91,726.35 874.73,722.55 878.55,726.35 882.37,722.55 886.19,726.35 890.01,722.55 893.82,726.35 897.64,722.55 901.46,726.35 905.28,722.55 909.10,726.35 912.92,722.55 916.73,726.35 920.55,722.55 924.37,726.35 928.19,722.55 932.01,726.35 935.82,722.55 939.64,726.35 943.46,722.55 947.28,726.35 951.10,722.55 954.92,726.35 958.73,722.55 962.55,726.35 966.37,722.55 970.19,726.35 974.01,722.55 977.83,726.35 981.64,722.55 985.46,726.35 989.28,722.55 993.10,726.35 996.92,722.55 1000.74,726.35 1004.55,722.55 1008.37,726.35 1012.19,722.55 1016.01,726.35 1019.83,722.55 1023.65,726.35 1027.46,722.55 1031.28,726.35 1035.10,722.55" fill="none" stroke="#6E6ED2" stroke-width="1.3" stroke-linejoin="round"/><polyline points="732.05,747.41 735.81,751.21 739.57,747.41 743.34,751.21 747.10,747.41 750.86,751.21 754.62,747.41 758.38,751.21 762.15,747.41 765.91,751.21 769.67,747.41 773.43,751.21 777.19,747.41 780.96,751.21 784.72,747.41 788.48,751.21 792.24,747.41 796.00,751.21 799.77,747.41 803.53,751.21 807.29,747.41 811.05,751.21 814.81,747.41 818.58,751.21 822.34,747.41 826.10,751.21" fill="none" stroke="#6E6ED2" stroke-width="1.3" stroke-linejoin="round"/><polyline points="784.30,772.27 788.15,776.07 792.00,772.27 795.85,776.07 799.70,772.27 803.55,776.07 807.40,772.27 811.25,776.07 815.10,772.27 818.95,776.07 822.80,772.27 826.65,776.07 830.50,772.27 834.35,776.07 838.20,772.27 842.05,776.07 845.90,772.27 849.75,776.07 853.60,772.27 857.45,776.07 861.30,772.27 865.15,776.07 869.00,772.27 872.85,776.07 876.70,772.27 880.55,776.07 884.40,772.27 888.25,776.07 892.10,772.27 895.95,776.07 899.80,772.27 903.65,776.07 907.50,772.27 911.35,776.07 915.20,772.27 919.05,776.07 922.90,772.27 926.75,776.07 930.60,772.27" fill="none" stroke="#6E6ED2" stroke-width="1.3" stroke-linejoin="round"/><polyline points="836.55,797.13 840.37,800.93 844.19,797.13 848.00,800.93 851.82,797.13 855.64,800.93 859.46,797.13 863.28,800.93 867.10,797.13 870.91,800.93 874.73,797.13 878.55,800.93 882.37,797.13 886.19,800.93 890.01,797.13 893.82,800.93 897.64,797.13 901.46,800.93 905.28,797.13 909.10,800.93 912.92,797.13 916.73,800.93 920.55,797.13 924.37,800.93 928.19,797.13 932.01,800.93 935.82,797.13 939.64,800.93 943.46,797.13 947.28,800.93 951.10,797.13 954.92,800.93 958.73,797.13 962.55,800.93 966.37,797.13 970.19,800.93 974.01,797.13 977.83,800.93 981.64,797.13 985.46,800.93 989.28,797.13 993.10,800.93 996.92,797.13 1000.74,800.93 1004.55,797.13 1008.37,800.93 1012.19,797.13 1016.01,800.93 1019.83,797.13 1023.65,800.93 1027.46,797.13 1031.28,800.93 1035.10,797.13" fill="none" stroke="#6E6ED2" stroke-width="1.3" stroke-linejoin="round"/><polyline points="732.05,821.99 735.81,825.79 739.57,821.99 743.34,825.79 747.10,821.99 750.86,825.79 754.62,821.99 758.38,825.79 762.15,821.99 765.91,825.79 769.67,821.99 773.43,825.79 777.19,821.99 780.96,825.79 784.72,821.99 788.48,825.79 792.24,821.99 796.00,825.79 799.77,821.99 803.53,825.79 807.29,821.99 811.05,825.79 814.81,821.99 818.58,825.79 822.34,821.99 826.10,825.79" fill="none" stroke="#6E6ED2" stroke-width="1.3" stroke-linejoin="round"/><polyline points="784.30,846.85 788.15,850.65 792.00,846.85 795.85,850.65 799.70,846.85 803.55,850.65 807.40,846.85 811.25,850.65 815.10,846.85 818.95,850.65 822.80,846.85 826.65,850.65 830.50,846.85 834.35,850.65 838.20,846.85 842.05,850.65 845.90,846.85 849.75,850.65 853.60,846.85 857.45,850.65 861.30,846.85 865.15,850.65 869.00,846.85 872.85,850.65 876.70,846.85 880.55,850.65 884.40,846.85 888.25,850.65 892.10,846.85 895.95,850.65 899.80,846.85 903.65,850.65 907.50,846.85 911.35,850.65 915.20,846.85 919.05,850.65 922.90,846.85 926.75,850.65 930.60,846.85" fill="none" stroke="#6E6ED2" stroke-width="1.3" stroke-linejoin="round"/><polyline points="836.55,871.71 840.37,875.51 844.19,871.71 848.00,875.51 851.82,871.71 855.64,875.51 859.46,871.71 863.28,875.51 867.10,871.71 870.91,875.51 874.73,871.71 878.55,875.51 882.37,871.71 886.19,875.51 890.01,871.71 893.82,875.51 897.64,871.71 901.46,875.51 905.28,871.71 909.10,875.51 912.92,871.71 916.73,875.51 920.55,871.71 924.37,875.51 928.19,871.71 932.01,875.51 935.82,871.71 939.64,875.51 943.46,871.71 947.28,875.51 951.10,871.71 954.92,875.51 958.73,871.71 962.55,875.51 966.37,871.71 970.19,875.51 974.01,871.71 977.83,875.51 981.64,871.71 985.46,875.51 989.28,871.71 993.10,875.51 996.92,871.71 1000.74,875.51 1004.55,871.71 1008.37,875.51 1012.19,871.71 1016.01,875.51 1019.83,871.71 1023.65,875.51 1027.46,871.71 1031.28,875.51 1035.10,871.71" fill="none" stroke="#6E6ED2" stroke-width="1.3" stroke-linejoin="round"/><polyline points="732.05,896.57 735.81,900.37 739.57,896.57 743.34,900.37 747.10,896.57 750.86,900.37 754.62,896.57 758.38,900.37 762.15,896.57 765.91,900.37 769.67,896.57 773.43,900.37 777.19,896.57 780.96,900.37 784.72,896.57 788.48,900.37 792.24,896.57 796.00,900.37 799.77,896.57 803.53,900.37 807.29,896.57 811.05,900.37 814.81,896.57 818.58,900.37 822.34,896.57 826.10,900.37" fill="none" stroke="#6E6ED2" stroke-width="1.3" stroke-linejoin="round"/><polyline points="784.30,921.43 788.15,925.23 792.00,921.43 795.85,925.23 799.70,921.43 803.55,925.23 807.40,921.43 811.25,925.23 815.10,921.43 818.95,925.23 822.80,921.43 826.65,925.23 830.50,921.43 834.35,925.23 838.20,921.43 842.05,925.23 845.90,921.43 849.75,925.23 853.60,921.43 857.45,925.23 861.30,921.43 865.15,925.23 869.00,921.43 872.85,925.23 876.70,921.43 880.55,925.23 884.40,921.43 888.25,925.23 892.10,921.43 895.95,925.23 899.80,921.43 903.65,925.23 907.50,921.43 911.35,925.23 915.20,921.43 919.05,925.23 922.90,921.43 926.75,925.23 930.60,921.43" fill="none" stroke="#6E6ED2" stroke-width="1.3" stroke-linejoin="round"/><polyline points="836.55,946.29 840.37,950.09 844.19,946.29 848.00,950.09 851.82,946.29 855.64,950.09 859.46,946.29 863.28,950.09 867.10,946.29 870.91,950.09 874.73,946.29 878.55,950.09 882.37,946.29 886.19,950.09 890.01,946.29 893.82,950.09 897.64,946.29 901.46,950.09 905.28,946.29 909.10,950.09 912.92,946.29 916.73,950.09 920.55,946.29 924.37,950.09 928.19,946.29 932.01,950.09 935.82,946.29 939.64,950.09 943.46,946.29 947.28,950.09 951.10,946.29 954.92,950.09 958.73,946.29 962.55,950.09 966.37,946.29 970.19,950.09 974.01,946.29 977.83,950.09 981.64,946.29 985.46,950.09 989.28,946.29 993.10,950.09 996.92,946.29 1000.74,950.09 1004.55,946.29 1008.37,950.09 1012.19,946.29 1016.01,950.09 1019.83,946.29 1023.65,950.09 1027.46,946.29 1031.28,950.09 1035.10,946.29" fill="none" stroke="#6E6ED2" stroke-width="1.3" stroke-linejoin="round"/></svg>
<svg class="a" style="left:390px;top:307px;" width="15" height="21" viewBox="0 0 15 21"><path d="M7.5,1 C11,1 13.5,3.6 13.5,7 C13.5,9.5 12,11 10.5,13 H4.5 C3,11 1.5,9.5 1.5,7 C1.5,3.6 4,1 7.5,1 Z" fill="#F7B21B" stroke="#5A3C08" stroke-width="1.4"/><path d="M6.5,13 V9 M8.5,13 V9" stroke="#5A3C08" stroke-width="1"/><path d="M4.5,13.5 H10.5 V17.5 Q10.5,20.5 7.5,20.5 Q4.5,20.5 4.5,17.5 Z" fill="#3A3A3A"/></svg>
<svg class="a" style="left:870px;top:675px;" width="9" height="16" viewBox="0 0 9 16"><path d="M0.5,0.75 H3.7 Q4.5,0.75 4.5,1.5 Q4.5,0.75 5.3,0.75 H8.5 M4.5,1.5 V14.5 M0.5,15.25 H3.7 Q4.5,15.25 4.5,14.5 Q4.5,15.25 5.3,15.25 H8.5" stroke="#111" stroke-width="1.3" fill="none"/></svg>
<div class="a" style="left:360px;top:952px;width:1204px;height:21px;background:#F5F5F5;"></div>
<div class="a" style="left:360px;top:973px;width:1205px;height:1px;background:#CCCEDB;"></div>
<div class="a" style="left:361px;top:952px;width:73px;height:21px;background:#FFFFFF;box-sizing:border-box;border:1px solid #CCCEDB;"></div>
<div class="a s" style="left:364.50px;top:955.73px;font-size:14.5px;line-height:14.5px;color:#1E1E1E;letter-spacing:-0.609px;">117 %</div>
<svg class="a" style="left:423.5px;top:960.5px;" width="8" height="5" viewBox="0 0 8 5"><path d="M0,0 H8 L4,4 Z" fill="#717171"/></svg>
<svg class="a" style="left:465px;top:955px;" width="14" height="14" viewBox="0 0 14 14"><circle cx="7.0" cy="7.0" r="6.5" fill="#2C9A2C"/><path d="M3.5,7.28 L6.02,9.94 L10.5,4.2" stroke="#fff" stroke-width="1.9600000000000002" fill="none"/></svg>
<div class="a s" style="left:486.00px;top:955.73px;font-size:14.5px;line-height:14.5px;color:#1E1E1E;letter-spacing:-0.466px;">No issues found</div>
<div class="a" style="left:664px;top:954px;width:1px;height:17px;background:#CCCEDB;"></div>
<svg class="a" style="left:682px;top:954px;" width="15" height="16" viewBox="0 0 15 16"><path d="M9,1 L14,5 L8,13 L3,9 Z" fill="#424242"/><path d="M3,9 L1,15 L8,13" fill="#424242"/></svg>
<svg class="a" style="left:703px;top:960px;" width="9" height="6" viewBox="0 0 9 6"><path d="M0,0 H9 L4.5,5 Z" fill="#1E1E1E"/></svg>
<div class="a" style="left:1573px;top:129px;width:340px;height:820px;background:#EEEEF2;box-sizing:border-box;border:1px solid #CCCEDB;"></div>
<div class="a s" style="left:1578.50px;top:136.73px;font-size:14.5px;line-height:14.5px;color:#424242;letter-spacing:0.175px;">Solution Explorer</div>
<svg class="a" style="left:1701px;top:138px;" width="139" height="8" viewBox="0 0 139 8"><rect x="0" y="0" width="1" height="1" fill="#B8B8C0"/><rect x="2" y="0" width="1" height="1" fill="#B8B8C0"/><rect x="4" y="0" width="1" height="1" fill="#B8B8C0"/><rect x="6" y="0" width="1" height="1" fill="#B8B8C0"/><rect x="8" y="0" width="1" height="1" fill="#B8B8C0"/><rect x="10" y="0" width="1" height="1" fill="#B8B8C0"/><rect x="12" y="0" width="1" height="1" fill="#B8B8C0"/><rect x="14" y="0" width="1" height="1" fill="#B8B8C0"/><rect x="16" y="0" width="1" height="1" fill="#B8B8C0"/><rect x="18" y="0" width="1" height="1" fill="#B8B8C0"/><rect x="20" y="0" width="1" height="1" fill="#B8B8C0"/><rect x="22" y="0" width="1" height="1" fill="#B8B8C0"/><rect x="24" y="0" width="1" height="1" fill="#B8B8C0"/><rect x="26" y="0" width="1" height="1" fill="#B8B8C0"/><rect x="28" y="0" width="1" height="1" fill="#B8B8C0"/><rect x="30" y="0" width="1" height="1" fill="#B8B8C0"/><rect x="32" y="0" width="1" height="1" fill="#B8B8C0"/><rect x="34" y="0" width="1" height="1" fill="#B8B8C0"/><rect x="36" y="0" width="1" height="1" fill="#B8B8C0"/><rect x="38" y="0" width="1" height="1" fill="#B8B8C0"/><rect x="40" y="0" width="1" height="1" fill="#B8B8C0"/><rect x="42" y="0" width="1" height="1" fill="#B8B8C0"/><rect x="44" y="0" width="1" height="1" fill="#B8B8C0"/><rect x="46" y="0" width="1" height="1" fill="#B8B8C0"/><rect x="48" y="0" width="1" height="1" fill="#B8B8C0"/><rect x="50" y="0" width="1" height="1" fill="#B8B8C0"/><rect x="52" y="0" width="1" height="1" fill="#B8B8C0"/><rect x="54" y="0" width="1" height="1" fill="#B8B8C0"/><rect x="56" y="0" width="1" height="1" fill="#B8B8C0"/><rect x="58" y="0" width="1" height="1" fill="#B8B8C0"/><rect x="60" y="0" width="1" height="1" fill="#B8B8C0"/><rect x="62" y="0" width="1" height="1" fill="#B8B8C0"/><rect x="64" y="0" width="1" height="1" fill="#B8B8C0"/><rect x="66" y="0" width="1" height="1" fill="#B8B8C0"/><rect x="68" y="0" width="1" height="1" fill="#B8B8C0"/><rect x="70" y="0" width="1" height="1" fill="#B8B8C0"/><rect x="72" y="0" width="1" height="1" fill="#B8B8C0"/><rect x="74" y="0" width="1" height="1" fill="#B8B8C0"/><rect x="76" y="0" width="1" height="1" fill="#B8B8C0"/><rect x="78" y="0" width="1" height="1" fill="#B8B8C0"/><rect x="80" y="0" width="1" height="1" fill="#B8B8C0"/><rect x="82" y="0" width="1" height="1" fill="#B8B8C0"/><rect x="84" y="0" width="1" height="1" fill="#B8B8C0"/><rect x="86" y="0" width="1" height="1" fill="#B8B8C0"/><rect x="88" y="0" width="1" height="1" fill="#B8B8C0"/><rect x="90" y="0" width="1" height="1" fill="#B8B8C0"/><rect x="92" y="0" width="1" height="1" fill="#B8B8C0"/><rect x="94" y="0" width="1" height="1" fill="#B8B8C0"/><rect x="96" y="0" width="1" height="1" fill="#B8B8C0"/><rect x="98" y="0" width="1" height="1" fill="#B8B8C0"/><rect x="100" y="0" width="1" height="1" fill="#B8B8C0"/><rect x="102" y="0" width="1" height="1" fill="#B8B8C0"/><rect x="104" y="0" width="1" height="1" fill="#B8B8C0"/><rect x="106" y="0" width="1" height="1" fill="#B8B8C0"/><rect x="108" y="0" width="1" height="1" fill="#B8B8C0"/><rect x="110" y="0" width="1" height="1" fill="#B8B8C0"/><rect x="112" y="0" width="1" height="1" fill="#B8B8C0"/><rect x="114" y="0" width="1" height="1" fill="#B8B8C0"/><rect x="116" y="0" width="1" height="1" fill="#B8B8C0"/><rect x="118" y="0" width="1" height="1" fill="#B8B8C0"/><rect x="120" y="0" width="1" height="1" fill="#B8B8C0"/><rect x="122" y="0" width="1" height="1" fill="#B8B8C0"/><rect x="124" y="0" width="1" height="1" fill="#B8B8C0"/><rect x="126" y="0" width="1" height="1" fill="#B8B8C0"/><rect x="128" y="0" width="1" height="1" fill="#B8B8C0"/><rect x="130" y="0" width="1" height="1" fill="#B8B8C0"/><rect x="132" y="0" width="1" height="1" fill="#B8B8C0"/><rect x="134" y="0" width="1" height="1" fill="#B8B8C0"/><rect x="136" y="0" width="1" height="1" fill="#B8B8C0"/><rect x="138" y="0" width="1" height="1" fill="#B8B8C0"/><rect x="1" y="2" width="1" height="1" fill="#B8B8C0"/><rect x="3" y="2" width="1" height="1" fill="#B8B8C0"/><rect x="5" y="2" width="1" height="1" fill="#B8B8C0"/><rect x="7" y="2" width="1" height="1" fill="#B8B8C0"/><rect x="9" y="2" width="1" height="1" fill="#B8B8C0"/><rect x="11" y="2" width="1" height="1" fill="#B8B8C0"/><rect x="13" y="2" width="1" height="1" fill="#B8B8C0"/><rect x="15" y="2" width="1" height="1" fill="#B8B8C0"/><rect x="17" y="2" width="1" height="1" fill="#B8B8C0"/><rect x="19" y="2" width="1" height="1" fill="#B8B8C0"/><rect x="21" y="2" width="1" height="1" fill="#B8B8C0"/><rect x="23" y="2" width="1" height="1" fill="#B8B8C0"/><rect x="25" y="2" width="1" height="1" fill="#B8B8C0"/><rect x="27" y="2" width="1" height="1" fill="#B8B8C0"/><rect x="29" y="2" width="1" height="1" fill="#B8B8C0"/><rect x="31" y="2" width="1" height="1" fill="#B8B8C0"/><rect x="33" y="2" width="1" height="1" fill="#B8B8C0"/><rect x="35" y="2" width="1" height="1" fill="#B8B8C0"/><rect x="37" y="2" width="1" height="1" fill="#B8B8C0"/><rect x="39" y="2" width="1" height="1" fill="#B8B8C0"/><rect x="41" y="2" width="1" height="1" fill="#B8B8C0"/><rect x="43" y="2" width="1" height="1" fill="#B8B8C0"/><rect x="45" y="2" width="1" height="1" fill="#B8B8C0"/><rect x="47" y="2" width="1" height="1" fill="#B8B8C0"/><rect x="49" y="2" width="1" height="1" fill="#B8B8C0"/><rect x="51" y="2" width="1" height="1" fill="#B8B8C0"/><rect x="53" y="2" width="1" height="1" fill="#B8B8C0"/><rect x="55" y="2" width="1" height="1" fill="#B8B8C0"/><rect x="57" y="2" width="1" height="1" fill="#B8B8C0"/><rect x="59" y="2" width="1" height="1" fill="#B8B8C0"/><rect x="61" y="2" width="1" height="1" fill="#B8B8C0"/><rect x="63" y="2" width="1" height="1" fill="#B8B8C0"/><rect x="65" y="2" width="1" height="1" fill="#B8B8C0"/><rect x="67" y="2" width="1" height="1" fill="#B8B8C0"/><rect x="69" y="2" width="1" height="1" fill="#B8B8C0"/><rect x="71" y="2" width="1" height="1" fill="#B8B8C0"/><rect x="73" y="2" width="1" height="1" fill="#B8B8C0"/><rect x="75" y="2" width="1" height="1" fill="#B8B8C0"/><rect x="77" y="2" width="1" height="1" fill="#B8B8C0"/><rect x="79" y="2" width="1" height="1" fill="#B8B8C0"/><rect x="81" y="2" width="1" height="1" fill="#B8B8C0"/><rect x="83" y="2" width="1" height="1" fill="#B8B8C0"/><rect x="85" y="2" width="1" height="1" fill="#B8B8C0"/><rect x="87" y="2" width="1" height="1" fill="#B8B8C0"/><rect x="89" y="2" width="1" height="1" fill="#B8B8C0"/><rect x="91" y="2" width="1" height="1" fill="#B8B8C0"/><rect x="93" y="2" width="1" height="1" fill="#B8B8C0"/><rect x="95" y="2" width="1" height="1" fill="#B8B8C0"/><rect x="97" y="2" width="1" height="1" fill="#B8B8C0"/><rect x="99" y="2" width="1" height="1" fill="#B8B8C0"/><rect x="101" y="2" width="1" height="1" fill="#B8B8C0"/><rect x="103" y="2" width="1" height="1" fill="#B8B8C0"/><rect x="105" y="2" width="1" height="1" fill="#B8B8C0"/><rect x="107" y="2" width="1" height="1" fill="#B8B8C0"/><rect x="109" y="2" width="1" height="1" fill="#B8B8C0"/><rect x="111" y="2" width="1" height="1" fill="#B8B8C0"/><rect x="113" y="2" width="1" height="1" fill="#B8B8C0"/><rect x="115" y="2" width="1" height="1" fill="#B8B8C0"/><rect x="117" y="2" width="1" height="1" fill="#B8B8C0"/><rect x="119" y="2" width="1" height="1" fill="#B8B8C0"/><rect x="121" y="2" width="1" height="1" fill="#B8B8C0"/><rect x="123" y="2" width="1" height="1" fill="#B8B8C0"/><rect x="125" y="2" width="1" height="1" fill="#B8B8C0"/><rect x="127" y="2" width="1" height="1" fill="#B8B8C0"/><rect x="129" y="2" width="1" height="1" fill="#B8B8C0"/><rect x="131" y="2" width="1" height="1" fill="#B8B8C0"/><rect x="133" y="2" width="1" height="1" fill="#B8B8C0"/><rect x="135" y="2" width="1" height="1" fill="#B8B8C0"/><rect x="137" y="2" width="1" height="1" fill="#B8B8C0"/><rect x="0" y="4" width="1" height="1" fill="#B8B8C0"/><rect x="2" y="4" width="1" height="1" fill="#B8B8C0"/><rect x="4" y="4" width="1" height="1" fill="#B8B8C0"/><rect x="6" y="4" width="1" height="1" fill="#B8B8C0"/><rect x="8" y="4" width="1" height="1" fill="#B8B8C0"/><rect x="10" y="4" width="1" height="1" fill="#B8B8C0"/><rect x="12" y="4" width="1" height="1" fill="#B8B8C0"/><rect x="14" y="4" width="1" height="1" fill="#B8B8C0"/><rect x="16" y="4" width="1" height="1" fill="#B8B8C0"/><rect x="18" y="4" width="1" height="1" fill="#B8B8C0"/><rect x="20" y="4" width="1" height="1" fill="#B8B8C0"/><rect x="22" y="4" width="1" height="1" fill="#B8B8C0"/><rect x="24" y="4" width="1" height="1" fill="#B8B8C0"/><rect x="26" y="4" width="1" height="1" fill="#B8B8C0"/><rect x="28" y="4" width="1" height="1" fill="#B8B8C0"/><rect x="30" y="4" width="1" height="1" fill="#B8B8C0"/><rect x="32" y="4" width="1" height="1" fill="#B8B8C0"/><rect x="34" y="4" width="1" height="1" fill="#B8B8C0"/><rect x="36" y="4" width="1" height="1" fill="#B8B8C0"/><rect x="38" y="4" width="1" height="1" fill="#B8B8C0"/><rect x="40" y="4" width="1" height="1" fill="#B8B8C0"/><rect x="42" y="4" width="1" height="1" fill="#B8B8C0"/><rect x="44" y="4" width="1" height="1" fill="#B8B8C0"/><rect x="46" y="4" width="1" height="1" fill="#B8B8C0"/><rect x="48" y="4" width="1" height="1" fill="#B8B8C0"/><rect x="50" y="4" width="1" height="1" fill="#B8B8C0"/><rect x="52" y="4" width="1" height="1" fill="#B8B8C0"/><rect x="54" y="4" width="1" height="1" fill="#B8B8C0"/><rect x="56" y="4" width="1" height="1" fill="#B8B8C0"/><rect x="58" y="4" width="1" height="1" fill="#B8B8C0"/><rect x="60" y="4" width="1" height="1" fill="#B8B8C0"/><rect x="62" y="4" width="1" height="1" fill="#B8B8C0"/><rect x="64" y="4" width="1" height="1" fill="#B8B8C0"/><rect x="66" y="4" width="1" height="1" fill="#B8B8C0"/><rect x="68" y="4" width="1" height="1" fill="#B8B8C0"/><rect x="70" y="4" width="1" height="1" fill="#B8B8C0"/><rect x="72" y="4" width="1" height="1" fill="#B8B8C0"/><rect x="74" y="4" width="1" height="1" fill="#B8B8C0"/><rect x="76" y="4" width="1" height="1" fill="#B8B8C0"/><rect x="78" y="4" width="1" height="1" fill="#B8B8C0"/><rect x="80" y="4" width="1" height="1" fill="#B8B8C0"/><rect x="82" y="4" width="1" height="1" fill="#B8B8C0"/><rect x="84" y="4" width="1" height="1" fill="#B8B8C0"/><rect x="86" y="4" width="1" height="1" fill="#B8B8C0"/><rect x="88" y="4" width="1" height="1" fill="#B8B8C0"/><rect x="90" y="4" width="1" height="1" fill="#B8B8C0"/><rect x="92" y="4" width="1" height="1" fill="#B8B8C0"/><rect x="94" y="4" width="1" height="1" fill="#B8B8C0"/><rect x="96" y="4" width="1" height="1" fill="#B8B8C0"/><rect x="98" y="4" width="1" height="1" fill="#B8B8C0"/><rect x="100" y="4" width="1" height="1" fill="#B8B8C0"/><rect x="102" y="4" width="1" height="1" fill="#B8B8C0"/><rect x="104" y="4" width="1" height="1" fill="#B8B8C0"/><rect x="106" y="4" width="1" height="1" fill="#B8B8C0"/><rect x="108" y="4" width="1" height="1" fill="#B8B8C0"/><rect x="110" y="4" width="1" height="1" fill="#B8B8C0"/><rect x="112" y="4" width="1" height="1" fill="#B8B8C0"/><rect x="114" y="4" width="1" height="1" fill="#B8B8C0"/><rect x="116" y="4" width="1" height="1" fill="#B8B8C0"/><rect x="118" y="4" width="1" height="1" fill="#B8B8C0"/><rect x="120" y="4" width="1" height="1" fill="#B8B8C0"/><rect x="122" y="4" width="1" height="1" fill="#B8B8C0"/><rect x="124" y="4" width="1" height="1" fill="#B8B8C0"/><rect x="126" y="4" width="1" height="1" fill="#B8B8C0"/><rect x="128" y="4" width="1" height="1" fill="#B8B8C0"/><rect x="130" y="4" width="1" height="1" fill="#B8B8C0"/><rect x="132" y="4" width="1" height="1" fill="#B8B8C0"/><rect x="134" y="4" width="1" height="1" fill="#B8B8C0"/><rect x="136" y="4" width="1" height="1" fill="#B8B8C0"/><rect x="138" y="4" width="1" height="1" fill="#B8B8C0"/><rect x="1" y="6" width="1" height="1" fill="#B8B8C0"/><rect x="3" y="6" width="1" height="1" fill="#B8B8C0"/><rect x="5" y="6" width="1" height="1" fill="#B8B8C0"/><rect x="7" y="6" width="1" height="1" fill="#B8B8C0"/><rect x="9" y="6" width="1" height="1" fill="#B8B8C0"/><rect x="11" y="6" width="1" height="1" fill="#B8B8C0"/><rect x="13" y="6" width="1" height="1" fill="#B8B8C0"/><rect x="15" y="6" width="1" height="1" fill="#B8B8C0"/><rect x="17" y="6" width="1" height="1" fill="#B8B8C0"/><rect x="19" y="6" width="1" height="1" fill="#B8B8C0"/><rect x="21" y="6" width="1" height="1" fill="#B8B8C0"/><rect x="23" y="6" width="1" height="1" fill="#B8B8C0"/><rect x="25" y="6" width="1" height="1" fill="#B8B8C0"/><rect x="27" y="6" width="1" height="1" fill="#B8B8C0"/><rect x="29" y="6" width="1" height="1" fill="#B8B8C0"/><rect x="31" y="6" width="1" height="1" fill="#B8B8C0"/><rect x="33" y="6" width="1" height="1" fill="#B8B8C0"/><rect x="35" y="6" width="1" height="1" fill="#B8B8C0"/><rect x="37" y="6" width="1" height="1" fill="#B8B8C0"/><rect x="39" y="6" width="1" height="1" fill="#B8B8C0"/><rect x="41" y="6" width="1" height="1" fill="#B8B8C0"/><rect x="43" y="6" width="1" height="1" fill="#B8B8C0"/><rect x="45" y="6" width="1" height="1" fill="#B8B8C0"/><rect x="47" y="6" width="1" height="1" fill="#B8B8C0"/><rect x="49" y="6" width="1" height="1" fill="#B8B8C0"/><rect x="51" y="6" width="1" height="1" fill="#B8B8C0"/><rect x="53" y="6" width="1" height="1" fill="#B8B8C0"/><rect x="55" y="6" width="1" height="1" fill="#B8B8C0"/><rect x="57" y="6" width="1" height="1" fill="#B8B8C0"/><rect x="59" y="6" width="1" height="1" fill="#B8B8C0"/><rect x="61" y="6" width="1" height="1" fill="#B8B8C0"/><rect x="63" y="6" width="1" height="1" fill="#B8B8C0"/><rect x="65" y="6" width="1" height="1" fill="#B8B8C0"/><rect x="67" y="6" width="1" height="1" fill="#B8B8C0"/><rect x="69" y="6" width="1" height="1" fill="#B8B8C0"/><rect x="71" y="6" width="1" height="1" fill="#B8B8C0"/><rect x="73" y="6" width="1" height="1" fill="#B8B8C0"/><rect x="75" y="6" width="1" height="1" fill="#B8B8C0"/><rect x="77" y="6" width="1" height="1" fill="#B8B8C0"/><rect x="79" y="6" width="1" height="1" fill="#B8B8C0"/><rect x="81" y="6" width="1" height="1" fill="#B8B8C0"/><rect x="83" y="6" width="1" height="1" fill="#B8B8C0"/><rect x="85" y="6" width="1" height="1" fill="#B8B8C0"/><rect x="87" y="6" width="1" height="1" fill="#B8B8C0"/><rect x="89" y="6" width="1" height="1" fill="#B8B8C0"/><rect x="91" y="6" width="1" height="1" fill="#B8B8C0"/><rect x="93" y="6" width="1" height="1" fill="#B8B8C0"/><rect x="95" y="6" width="1" height="1" fill="#B8B8C0"/><rect x="97" y="6" width="1" height="1" fill="#B8B8C0"/><rect x="99" y="6" width="1" height="1" fill="#B8B8C0"/><rect x="101" y="6" width="1" height="1" fill="#B8B8C0"/><rect x="103" y="6" width="1" height="1" fill="#B8B8C0"/><rect x="105" y="6" width="1" height="1" fill="#B8B8C0"/><rect x="107" y="6" width="1" height="1" fill="#B8B8C0"/><rect x="109" y="6" width="1" height="1" fill="#B8B8C0"/><rect x="111" y="6" width="1" height="1" fill="#B8B8C0"/><rect x="113" y="6" width="1" height="1" fill="#B8B8C0"/><rect x="115" y="6" width="1" height="1" fill="#B8B8C0"/><rect x="117" y="6" width="1" height="1" fill="#B8B8C0"/><rect x="119" y="6" width="1" height="1" fill="#B8B8C0"/><rect x="121" y="6" width="1" height="1" fill="#B8B8C0"/><rect x="123" y="6" width="1" height="1" fill="#B8B8C0"/><rect x="125" y="6" width="1" height="1" fill="#B8B8C0"/><rect x="127" y="6" width="1" height="1" fill="#B8B8C0"/><rect x="129" y="6" width="1" height="1" fill="#B8B8C0"/><rect x="131" y="6" width="1" height="1" fill="#B8B8C0"/><rect x="133" y="6" width="1" height="1" fill="#B8B8C0"/><rect x="135" y="6" width="1" height="1" fill="#B8B8C0"/><rect x="137" y="6" width="1" height="1" fill="#B8B8C0"/></svg>
<svg class="a" style="left:1851px;top:140px;" width="10" height="6" viewBox="0 0 10 6"><path d="M0,0 H10 L5,5.5 Z" fill="#1E1E1E"/></svg>
<svg class="a" style="left:1870px;top:137px;" width="11" height="14" viewBox="0 0 11 14"><path d="M2,1 H9 M3,1 V8 M8,1 V8 M0,8 H11 M5.5,8 V14" stroke="#1E1E1E" stroke-width="1.5" fill="none"/><rect x="3" y="1" width="2" height="7" fill="#1E1E1E"/></svg>
<svg class="a" style="left:1891px;top:138px;" width="12" height="11" viewBox="0 0 12 11"><path d="M1,0.5 L11,10.5 M11,0.5 L1,10.5" stroke="#1E1E1E" stroke-width="1.6"/></svg>
<svg class="a" style="left:1585px;top:167px;" width="15" height="15" viewBox="0 0 15 15"><circle cx="7.5" cy="7.5" r="7" fill="#C8C8C8"/><path d="M4,7.5 L7.5,4 M4,7.5 L7.5,11 M4,7.5 H11" stroke="#EEE" stroke-width="2" fill="none"/></svg>
<svg class="a" style="left:1612px;top:167px;" width="15" height="15" viewBox="0 0 15 15"><circle cx="7.5" cy="7.5" r="7" fill="#C8C8C8"/><path d="M11,7.5 L7.5,4 M11,7.5 L7.5,11 M11,7.5 H4" stroke="#EEE" stroke-width="2" fill="none"/></svg>
<svg class="a" style="left:1637px;top:164px;" width="18" height="18" viewBox="0 0 18 18"><path d="M1,9 L9,1.5 L17,9 M3.5,7 V17 H14.5 V7" stroke="#424242" stroke-width="1.6" fill="none"/><rect x="7" y="11" width="4" height="6" fill="#424242"/></svg>
<svg class="a" style="left:1665px;top:163px;" width="19" height="19" viewBox="0 0 19 19"><rect x="1" y="8" width="10" height="9" fill="none" stroke="#424242" stroke-width="1.6"/><path d="M9,1 H17 V12 H13" fill="#DCB67A"/><path d="M2,5 L5,2 M2,5 H7" stroke="#00539C" stroke-width="1.5"/><path d="M17,14 L14,17 M17,17 H12" stroke="#00539C" stroke-width="1.4"/></svg>
<svg class="a" style="left:1690.5px;top:172px;" width="8" height="5" viewBox="0 0 8 5"><path d="M0,0 H8 L4,4 Z" fill="#717171"/></svg>
<div class="a" style="left:1706px;top:162px;width:1px;height:25px;background:#CCCEDB;"></div>
<svg class="a" style="left:1717px;top:163px;" width="19" height="20" viewBox="0 0 19 20"><path d="M1,1 H6 L3.5,4 Z" fill="#424242"/><path d="M3.5,3 V7" stroke="#424242" stroke-width="1.3"/><circle cx="11.5" cy="12" r="6.5" fill="none" stroke="#424242" stroke-width="1.6"/><path d="M11.5,8 V12 H14.5" stroke="#424242" stroke-width="1.4" fill="none"/></svg>
<svg class="a" style="left:1743px;top:172px;" width="8" height="5" viewBox="0 0 8 5"><path d="M0,0 H8 L4,4 Z" fill="#717171"/></svg>
<svg class="a" style="left:1758px;top:164px;" width="18" height="19" viewBox="0 0 18 19"><path d="M14.5,9 A6.5,6.5 0 1 1 10,3" stroke="#00539C" stroke-width="2.3" fill="none"/><path d="M9,0 L14.5,3.5 L9,7 Z" fill="#00539C"/></svg>
<svg class="a" style="left:1787px;top:166px;" width="16" height="15" viewBox="0 0 16 15"><rect x="1" y="6" width="9" height="8" fill="none" stroke="#424242" stroke-width="1.5"/><path d="M4,6 V3 H12 V10 H10 M7,3 V1 H15 V8 H12" stroke="#424242" stroke-width="1.3" fill="none"/><path d="M3,10 H8" stroke="#424242" stroke-width="1.3"/></svg>
<svg class="a" style="left:1811px;top:164px;" width="20" height="19" viewBox="0 0 20 19"><path d="M5,3 H1 V18 H12 V15" fill="none" stroke="#424242" stroke-width="1.5"/><path d="M5,1 H14 L18,5 V15 H5 Z" fill="none" stroke="#424242" stroke-width="1.5"/><path d="M8,8 H15 M8,11 H15" stroke="#424242" stroke-width="1.2"/></svg>
<div class="a" style="left:1840px;top:162px;width:1px;height:25px;background:#CCCEDB;"></div>
<svg class="a" style="left:1850px;top:167px;" width="16" height="13" viewBox="0 0 16 13"><path d="M6,1 L1,6.5 L6,12 M10,1 L15,6.5 L10,12" stroke="#1E1E1E" stroke-width="1.7" fill="none"/></svg>
<svg class="a" style="left:1900px;top:161px;" width="7" height="4" viewBox="0 0 7 4"><rect x="0" y="0" width="1.5" height="3" fill="#717171"/><rect x="5" y="0" width="1.5" height="3" fill="#717171"/></svg>
<div class="a" style="left:1575px;top:191px;width:336px;height:27px;background:#FFFFFF;box-sizing:border-box;border:1px solid #CCCEDB;"></div>
<div class="a s" style="left:1581.00px;top:197.73px;font-size:14.5px;line-height:14.5px;color:#717171;letter-spacing:0.057px;">Search Solution Explorer (Ctrl+;)</div>
<svg class="a" style="left:1876px;top:195px;" width="19" height="18" viewBox="0 0 19 18"><circle cx="12" cy="6.5" r="4.5" fill="none" stroke="#424242" stroke-width="2"/><path d="M8.8,9.8 L2.5,16" stroke="#424242" stroke-width="2.8" stroke-linecap="round"/></svg>
<svg class="a" style="left:1900px;top:202px;" width="8" height="5" viewBox="0 0 8 5"><path d="M0,0 H8 L4,4 Z" fill="#717171"/></svg>
<div class="a" style="left:1574px;top:218px;width:338px;height:730px;background:#F5F5F5;"></div>
<div class="a" style="left:1573px;top:887.5px;width:318px;height:23.5px;background:#CBCCD4;"></div>
<svg class="a" style="left:1632.5px;top:226px;" width="8" height="12" viewBox="0 0 8 12"><path d="M1,1.5 L6,6 L1,10.5 Z" fill="none" stroke="#1E1E1E" stroke-width="1.2"/></svg>
<svg class="a" style="left:1649px;top:229px;" width="8" height="9" viewBox="0 0 8 9"><rect x="0.5" y="3.8" width="7" height="4.7" fill="#3D9CDB"/><path d="M2,3.8 V2.8 C2,0.6 6,0.6 6,2.8 V3.8" stroke="#3D9CDB" stroke-width="1.2" fill="none"/><rect x="3.3" y="5" width="1.4" height="2" fill="#fff"/></svg>
<svg class="a" style="left:1658px;top:223px;" width="19" height="19" viewBox="0 0 19 19"><path d="M2.5,16.5 L9.5,9.5" stroke="#424242" stroke-width="3.4" stroke-linecap="round"/><path d="M8,11 C6,7 8,2.5 12.5,2 L15,1.5 L12,5 L14,7.5 L17.5,4.5 C18,9 14,12.5 9.5,11.5 Z" fill="#424242"/></svg>
<div class="a s" style="left:1683.30px;top:225.53px;font-size:14.5px;line-height:14.5px;color:#1E1E1E;letter-spacing:0.341px;">Properties</div>
<svg class="a" style="left:1632.5px;top:249px;" width="8" height="12" viewBox="0 0 8 12"><path d="M1,1.5 L6,6 L1,10.5 Z" fill="none" stroke="#1E1E1E" stroke-width="1.2"/></svg>
<svg class="a" style="left:1659px;top:250px;" width="18" height="10" viewBox="0 0 18 10"><rect x="1" y="2" width="5" height="6" fill="#424242"/><rect x="10" y="0.5" width="7" height="9" fill="#424242"/><path d="M6,5 H10" stroke="#424242" stroke-width="1.2"/></svg>
<div class="a s" style="left:1683.30px;top:248.53px;font-size:14.5px;line-height:14.5px;color:#1E1E1E;letter-spacing:-0.116px;">References</div>
<svg class="a" style="left:1649px;top:275px;" width="8" height="9" viewBox="0 0 8 9"><rect x="0.5" y="3.8" width="7" height="4.7" fill="#3D9CDB"/><path d="M2,3.8 V2.8 C2,0.6 6,0.6 6,2.8 V3.8" stroke="#3D9CDB" stroke-width="1.2" fill="none"/><rect x="3.3" y="5" width="1.4" height="2" fill="#fff"/></svg>
<svg class="a" style="left:1658px;top:269px;" width="19" height="19" viewBox="0 0 19 19"><path d="M6,1 H13 L17,5 V18 H6 Z" fill="none" stroke="#424242" stroke-width="1.4"/><path d="M4,8 V11 C4,14 8,14 8,11 V8 M6,13 V18 M4.5,8 V6 M7.5,8 V6" stroke="#424242" stroke-width="1.5" fill="none"/></svg>
<div class="a s" style="left:1683.30px;top:271.53px;font-size:14.5px;line-height:14.5px;color:#1E1E1E;letter-spacing:0.120px;">packages.config</div>
<svg class="a" style="left:1632.5px;top:295px;" width="8" height="12" viewBox="0 0 8 12"><path d="M1,1.5 L6,6 L1,10.5 Z" fill="none" stroke="#1E1E1E" stroke-width="1.2"/></svg>
<svg class="a" style="left:1649px;top:298px;" width="8" height="9" viewBox="0 0 8 9"><rect x="0.5" y="3.8" width="7" height="4.7" fill="#3D9CDB"/><path d="M2,3.8 V2.8 C2,0.6 6,0.6 6,2.8 V3.8" stroke="#3D9CDB" stroke-width="1.2" fill="none"/><rect x="3.3" y="5" width="1.4" height="2" fill="#fff"/></svg>
<svg class="a" style="left:1660px;top:295px;" width="16" height="12" viewBox="0 0 16 12"><text x="0" y="10.5" font-family="Liberation Sans" font-size="12.5" font-weight="700" fill="#388A34">C</text><path d="M10,2 V9 M13,2 V9 M8.5,4 H15 M8.5,7 H15" stroke="#388A34" stroke-width="1.3"/></svg>
<div class="a s" style="left:1683.30px;top:294.53px;font-size:14.5px;line-height:14.5px;color:#1E1E1E;letter-spacing:-0.297px;">S01BasicAssertion.cs</div>
<svg class="a" style="left:1632.5px;top:318px;" width="8" height="12" viewBox="0 0 8 12"><path d="M1,1.5 L6,6 L1,10.5 Z" fill="none" stroke="#1E1E1E" stroke-width="1.2"/></svg>
<svg class="a" style="left:1649px;top:321px;" width="8" height="9" viewBox="0 0 8 9"><rect x="0.5" y="3.8" width="7" height="4.7" fill="#3D9CDB"/><path d="M2,3.8 V2.8 C2,0.6 6,0.6 6,2.8 V3.8" stroke="#3D9CDB" stroke-width="1.2" fill="none"/><rect x="3.3" y="5" width="1.4" height="2" fill="#fff"/></svg>
<svg class="a" style="left:1660px;top:318px;" width="16" height="12" viewBox="0 0 16 12"><text x="0" y="10.5" font-family="Liberation Sans" font-size="12.5" font-weight="700" fill="#388A34">C</text><path d="M10,2 V9 M13,2 V9 M8.5,4 H15 M8.5,7 H15" stroke="#388A34" stroke-width="1.3"/></svg>
<div class="a s" style="left:1683.30px;top:317.53px;font-size:14.5px;line-height:14.5px;color:#1E1E1E;letter-spacing:-0.220px;">S02AssertionScope.cs</div>
<svg class="a" style="left:1632.5px;top:341px;" width="8" height="12" viewBox="0 0 8 12"><path d="M1,1.5 L6,6 L1,10.5 Z" fill="none" stroke="#1E1E1E" stroke-width="1.2"/></svg>
<svg class="a" style="left:1649px;top:344px;" width="8" height="9" viewBox="0 0 8 9"><rect x="0.5" y="3.8" width="7" height="4.7" fill="#3D9CDB"/><path d="M2,3.8 V2.8 C2,0.6 6,0.6 6,2.8 V3.8" stroke="#3D9CDB" stroke-width="1.2" fill="none"/><rect x="3.3" y="5" width="1.4" height="2" fill="#fff"/></svg>
<svg class="a" style="left:1660px;top:341px;" width="16" height="12" viewBox="0 0 16 12"><text x="0" y="10.5" font-family="Liberation Sans" font-size="12.5" font-weight="700" fill="#388A34">C</text><path d="M10,2 V9 M13,2 V9 M8.5,4 H15 M8.5,7 H15" stroke="#388A34" stroke-width="1.3"/></svg>
<div class="a s" style="left:1683.30px;top:340.53px;font-size:14.5px;line-height:14.5px;color:#1E1E1E;letter-spacing:-0.160px;">S03StringAssertion.cs</div>
<svg class="a" style="left:1632.5px;top:364px;" width="8" height="12" viewBox="0 0 8 12"><path d="M1,1.5 L6,6 L1,10.5 Z" fill="none" stroke="#1E1E1E" stroke-width="1.2"/></svg>
<svg class="a" style="left:1649px;top:367px;" width="8" height="9" viewBox="0 0 8 9"><rect x="0.5" y="3.8" width="7" height="4.7" fill="#3D9CDB"/><path d="M2,3.8 V2.8 C2,0.6 6,0.6 6,2.8 V3.8" stroke="#3D9CDB" stroke-width="1.2" fill="none"/><rect x="3.3" y="5" width="1.4" height="2" fill="#fff"/></svg>
<svg class="a" style="left:1660px;top:364px;" width="16" height="12" viewBox="0 0 16 12"><text x="0" y="10.5" font-family="Liberation Sans" font-size="12.5" font-weight="700" fill="#388A34">C</text><path d="M10,2 V9 M13,2 V9 M8.5,4 H15 M8.5,7 H15" stroke="#388A34" stroke-width="1.3"/></svg>
<div class="a s" style="left:1683.30px;top:363.53px;font-size:14.5px;line-height:14.5px;color:#1E1E1E;letter-spacing:-0.091px;">S05DateTimeAssertion.cs</div>
<svg class="a" style="left:1632.5px;top:387px;" width="8" height="12" viewBox="0 0 8 12"><path d="M1,1.5 L6,6 L1,10.5 Z" fill="none" stroke="#1E1E1E" stroke-width="1.2"/></svg>
<svg class="a" style="left:1649px;top:390px;" width="8" height="9" viewBox="0 0 8 9"><rect x="0.5" y="3.8" width="7" height="4.7" fill="#3D9CDB"/><path d="M2,3.8 V2.8 C2,0.6 6,0.6 6,2.8 V3.8" stroke="#3D9CDB" stroke-width="1.2" fill="none"/><rect x="3.3" y="5" width="1.4" height="2" fill="#fff"/></svg>
<svg class="a" style="left:1660px;top:387px;" width="16" height="12" viewBox="0 0 16 12"><text x="0" y="10.5" font-family="Liberation Sans" font-size="12.5" font-weight="700" fill="#388A34">C</text><path d="M10,2 V9 M13,2 V9 M8.5,4 H15 M8.5,7 H15" stroke="#388A34" stroke-width="1.3"/></svg>
<div class="a s" style="left:1683.30px;top:386.53px;font-size:14.5px;line-height:14.5px;color:#1E1E1E;width:208.70000000000005px;overflow:hidden;">S06TypeMethodPropertyAssembly.cs</div>
<svg class="a" style="left:1632.5px;top:410px;" width="8" height="12" viewBox="0 0 8 12"><path d="M1,1.5 L6,6 L1,10.5 Z" fill="none" stroke="#1E1E1E" stroke-width="1.2"/></svg>
<svg class="a" style="left:1649px;top:413px;" width="8" height="9" viewBox="0 0 8 9"><rect x="0.5" y="3.8" width="7" height="4.7" fill="#3D9CDB"/><path d="M2,3.8 V2.8 C2,0.6 6,0.6 6,2.8 V3.8" stroke="#3D9CDB" stroke-width="1.2" fill="none"/><rect x="3.3" y="5" width="1.4" height="2" fill="#fff"/></svg>
<svg class="a" style="left:1660px;top:410px;" width="16" height="12" viewBox="0 0 16 12"><text x="0" y="10.5" font-family="Liberation Sans" font-size="12.5" font-weight="700" fill="#388A34">C</text><path d="M10,2 V9 M13,2 V9 M8.5,4 H15 M8.5,7 H15" stroke="#388A34" stroke-width="1.3"/></svg>
<div class="a s" style="left:1683.30px;top:409.53px;font-size:14.5px;line-height:14.5px;color:#1E1E1E;letter-spacing:-0.227px;">S07ActionThreadTask.cs</div>
<svg class="a" style="left:1632.5px;top:433px;" width="8" height="12" viewBox="0 0 8 12"><path d="M1,1.5 L6,6 L1,10.5 Z" fill="none" stroke="#1E1E1E" stroke-width="1.2"/></svg>
<svg class="a" style="left:1649px;top:436px;" width="8" height="9" viewBox="0 0 8 9"><rect x="0.5" y="3.8" width="7" height="4.7" fill="#3D9CDB"/><path d="M2,3.8 V2.8 C2,0.6 6,0.6 6,2.8 V3.8" stroke="#3D9CDB" stroke-width="1.2" fill="none"/><rect x="3.3" y="5" width="1.4" height="2" fill="#fff"/></svg>
<svg class="a" style="left:1660px;top:433px;" width="16" height="12" viewBox="0 0 16 12"><text x="0" y="10.5" font-family="Liberation Sans" font-size="12.5" font-weight="700" fill="#388A34">C</text><path d="M10,2 V9 M13,2 V9 M8.5,4 H15 M8.5,7 H15" stroke="#388A34" stroke-width="1.3"/></svg>
<div class="a s" style="left:1683.30px;top:432.53px;font-size:14.5px;line-height:14.5px;color:#1E1E1E;letter-spacing:0.005px;">S08TypeNullableBoolean.cs</div>
<svg class="a" style="left:1632.5px;top:456px;" width="8" height="12" viewBox="0 0 8 12"><path d="M1,1.5 L6,6 L1,10.5 Z" fill="none" stroke="#1E1E1E" stroke-width="1.2"/></svg>
<svg class="a" style="left:1649px;top:459px;" width="8" height="9" viewBox="0 0 8 9"><rect x="0.5" y="3.8" width="7" height="4.7" fill="#3D9CDB"/><path d="M2,3.8 V2.8 C2,0.6 6,0.6 6,2.8 V3.8" stroke="#3D9CDB" stroke-width="1.2" fill="none"/><rect x="3.3" y="5" width="1.4" height="2" fill="#fff"/></svg>
<svg class="a" style="left:1660px;top:456px;" width="16" height="12" viewBox="0 0 16 12"><text x="0" y="10.5" font-family="Liberation Sans" font-size="12.5" font-weight="700" fill="#388A34">C</text><path d="M10,2 V9 M13,2 V9 M8.5,4 H15 M8.5,7 H15" stroke="#388A34" stroke-width="1.3"/></svg>
<div class="a s" style="left:1683.30px;top:455.53px;font-size:14.5px;line-height:14.5px;color:#1E1E1E;letter-spacing:-0.346px;">S09GuidEnum.cs</div>
<svg class="a" style="left:1632.5px;top:479px;" width="8" height="12" viewBox="0 0 8 12"><path d="M1,1.5 L6,6 L1,10.5 Z" fill="none" stroke="#1E1E1E" stroke-width="1.2"/></svg>
<svg class="a" style="left:1649px;top:482px;" width="8" height="9" viewBox="0 0 8 9"><rect x="0.5" y="3.8" width="7" height="4.7" fill="#3D9CDB"/><path d="M2,3.8 V2.8 C2,0.6 6,0.6 6,2.8 V3.8" stroke="#3D9CDB" stroke-width="1.2" fill="none"/><rect x="3.3" y="5" width="1.4" height="2" fill="#fff"/></svg>
<svg class="a" style="left:1660px;top:479px;" width="16" height="12" viewBox="0 0 16 12"><text x="0" y="10.5" font-family="Liberation Sans" font-size="12.5" font-weight="700" fill="#388A34">C</text><path d="M10,2 V9 M13,2 V9 M8.5,4 H15 M8.5,7 H15" stroke="#388A34" stroke-width="1.3"/></svg>
<div class="a s" style="left:1683.30px;top:478.53px;font-size:14.5px;line-height:14.5px;color:#1E1E1E;letter-spacing:-0.068px;">S1001IntCollectionAssert.cs</div>
<svg class="a" style="left:1632.5px;top:502px;" width="8" height="12" viewBox="0 0 8 12"><path d="M1,1.5 L6,6 L1,10.5 Z" fill="none" stroke="#1E1E1E" stroke-width="1.2"/></svg>
<svg class="a" style="left:1649px;top:505px;" width="8" height="9" viewBox="0 0 8 9"><rect x="0.5" y="3.8" width="7" height="4.7" fill="#3D9CDB"/><path d="M2,3.8 V2.8 C2,0.6 6,0.6 6,2.8 V3.8" stroke="#3D9CDB" stroke-width="1.2" fill="none"/><rect x="3.3" y="5" width="1.4" height="2" fill="#fff"/></svg>
<svg class="a" style="left:1660px;top:502px;" width="16" height="12" viewBox="0 0 16 12"><text x="0" y="10.5" font-family="Liberation Sans" font-size="12.5" font-weight="700" fill="#388A34">C</text><path d="M10,2 V9 M13,2 V9 M8.5,4 H15 M8.5,7 H15" stroke="#388A34" stroke-width="1.3"/></svg>
<div class="a s" style="left:1683.30px;top:501.53px;font-size:14.5px;line-height:14.5px;color:#1E1E1E;letter-spacing:-0.050px;">S1002StringCollectionAssert.cs</div>
<svg class="a" style="left:1632.5px;top:525px;" width="8" height="12" viewBox="0 0 8 12"><path d="M1,1.5 L6,6 L1,10.5 Z" fill="none" stroke="#1E1E1E" stroke-width="1.2"/></svg>
<svg class="a" style="left:1649px;top:528px;" width="8" height="8" viewBox="0 0 8 8"><path d="M4,0.5 V7.5 M0.5,4 H7.5" stroke="#388A34" stroke-width="1.6"/></svg>
<svg class="a" style="left:1660px;top:525px;" width="16" height="12" viewBox="0 0 16 12"><text x="0" y="10.5" font-family="Liberation Sans" font-size="12.5" font-weight="700" fill="#388A34">C</text><path d="M10,2 V9 M13,2 V9 M8.5,4 H15 M8.5,7 H15" stroke="#388A34" stroke-width="1.3"/></svg>
<div class="a s" style="left:1683.30px;top:524.53px;font-size:14.5px;line-height:14.5px;color:#1E1E1E;width:208.70000000000005px;overflow:hidden;">S1101ObjectCollectionAssertionEqual.cs</div>
<svg class="a" style="left:1611px;top:549px;" width="8" height="9" viewBox="0 0 8 9"><path d="M7.5,0.5 V8.5 H0 Z" fill="#1E1E1E"/></svg>
<svg class="a" style="left:1625px;top:550px;" width="9" height="10" viewBox="0 0 9 10"><path d="M1,5 L3.5,8.5 L8,0.5" stroke="#D41818" stroke-width="1.8" fill="none"/></svg>
<svg class="a" style="left:1635px;top:547px;" width="18" height="15" viewBox="0 0 18 15"><rect x="0.75" y="0.75" width="16.5" height="13.5" fill="#F5F5F5" stroke="#6A9F6A" stroke-width="1.5"/><text x="2.5" y="11" font-family="Liberation Sans" font-size="9.5" font-weight="700" fill="#424242">C#</text></svg>
<div class="a s" style="left:1660.00px;top:547.53px;font-size:14.5px;line-height:14.5px;color:#1E1E1E;letter-spacing:0.013px;">OnlineGame.NUnit</div>
<svg class="a" style="left:1632.5px;top:571px;" width="8" height="12" viewBox="0 0 8 12"><path d="M1,1.5 L6,6 L1,10.5 Z" fill="none" stroke="#1E1E1E" stroke-width="1.2"/></svg>
<svg class="a" style="left:1649px;top:574px;" width="8" height="9" viewBox="0 0 8 9"><rect x="0.5" y="3.8" width="7" height="4.7" fill="#3D9CDB"/><path d="M2,3.8 V2.8 C2,0.6 6,0.6 6,2.8 V3.8" stroke="#3D9CDB" stroke-width="1.2" fill="none"/><rect x="3.3" y="5" width="1.4" height="2" fill="#fff"/></svg>
<svg class="a" style="left:1658px;top:568px;" width="19" height="19" viewBox="0 0 19 19"><path d="M2.5,16.5 L9.5,9.5" stroke="#424242" stroke-width="3.4" stroke-linecap="round"/><path d="M8,11 C6,7 8,2.5 12.5,2 L15,1.5 L12,5 L14,7.5 L17.5,4.5 C18,9 14,12.5 9.5,11.5 Z" fill="#424242"/></svg>
<div class="a s" style="left:1683.30px;top:570.53px;font-size:14.5px;line-height:14.5px;color:#1E1E1E;letter-spacing:0.341px;">Properties</div>
<svg class="a" style="left:1632.5px;top:594px;" width="8" height="12" viewBox="0 0 8 12"><path d="M1,1.5 L6,6 L1,10.5 Z" fill="none" stroke="#1E1E1E" stroke-width="1.2"/></svg>
<svg class="a" style="left:1659px;top:595px;" width="18" height="10" viewBox="0 0 18 10"><rect x="1" y="2" width="5" height="6" fill="#424242"/><rect x="10" y="0.5" width="7" height="9" fill="#424242"/><path d="M6,5 H10" stroke="#424242" stroke-width="1.2"/></svg>
<div class="a s" style="left:1683.30px;top:593.53px;font-size:14.5px;line-height:14.5px;color:#1E1E1E;letter-spacing:-0.116px;">References</div>
<svg class="a" style="left:1649px;top:620px;" width="8" height="9" viewBox="0 0 8 9"><rect x="0.5" y="3.8" width="7" height="4.7" fill="#3D9CDB"/><path d="M2,3.8 V2.8 C2,0.6 6,0.6 6,2.8 V3.8" stroke="#3D9CDB" stroke-width="1.2" fill="none"/><rect x="3.3" y="5" width="1.4" height="2" fill="#fff"/></svg>
<svg class="a" style="left:1658px;top:614px;" width="19" height="19" viewBox="0 0 19 19"><path d="M6,1 H13 L17,5 V18 H6 Z" fill="none" stroke="#424242" stroke-width="1.4"/><path d="M4,8 V11 C4,14 8,14 8,11 V8 M6,13 V18 M4.5,8 V6 M7.5,8 V6" stroke="#424242" stroke-width="1.5" fill="none"/></svg>
<div class="a s" style="left:1683.30px;top:616.53px;font-size:14.5px;line-height:14.5px;color:#1E1E1E;letter-spacing:0.120px;">packages.config</div>
<svg class="a" style="left:1632.5px;top:640px;" width="8" height="12" viewBox="0 0 8 12"><path d="M1,1.5 L6,6 L1,10.5 Z" fill="none" stroke="#1E1E1E" stroke-width="1.2"/></svg>
<svg class="a" style="left:1649px;top:643px;" width="8" height="9" viewBox="0 0 8 9"><rect x="0.5" y="3.8" width="7" height="4.7" fill="#3D9CDB"/><path d="M2,3.8 V2.8 C2,0.6 6,0.6 6,2.8 V3.8" stroke="#3D9CDB" stroke-width="1.2" fill="none"/><rect x="3.3" y="5" width="1.4" height="2" fill="#fff"/></svg>
<svg class="a" style="left:1660px;top:640px;" width="16" height="12" viewBox="0 0 16 12"><text x="0" y="10.5" font-family="Liberation Sans" font-size="12.5" font-weight="700" fill="#388A34">C</text><path d="M10,2 V9 M13,2 V9 M8.5,4 H15 M8.5,7 H15" stroke="#388A34" stroke-width="1.3"/></svg>
<div class="a s" style="left:1683.30px;top:639.53px;font-size:14.5px;line-height:14.5px;color:#1E1E1E;letter-spacing:-0.297px;">S01BasicAssertion.cs</div>
<svg class="a" style="left:1632.5px;top:663px;" width="8" height="12" viewBox="0 0 8 12"><path d="M1,1.5 L6,6 L1,10.5 Z" fill="none" stroke="#1E1E1E" stroke-width="1.2"/></svg>
<svg class="a" style="left:1649px;top:666px;" width="8" height="9" viewBox="0 0 8 9"><rect x="0.5" y="3.8" width="7" height="4.7" fill="#3D9CDB"/><path d="M2,3.8 V2.8 C2,0.6 6,0.6 6,2.8 V3.8" stroke="#3D9CDB" stroke-width="1.2" fill="none"/><rect x="3.3" y="5" width="1.4" height="2" fill="#fff"/></svg>
<svg class="a" style="left:1660px;top:663px;" width="16" height="12" viewBox="0 0 16 12"><text x="0" y="10.5" font-family="Liberation Sans" font-size="12.5" font-weight="700" fill="#388A34">C</text><path d="M10,2 V9 M13,2 V9 M8.5,4 H15 M8.5,7 H15" stroke="#388A34" stroke-width="1.3"/></svg>
<div class="a s" style="left:1683.30px;top:662.53px;font-size:14.5px;line-height:14.5px;color:#1E1E1E;letter-spacing:-0.220px;">S02AssertionScope.cs</div>
<svg class="a" style="left:1632.5px;top:686px;" width="8" height="12" viewBox="0 0 8 12"><path d="M1,1.5 L6,6 L1,10.5 Z" fill="none" stroke="#1E1E1E" stroke-width="1.2"/></svg>
<svg class="a" style="left:1649px;top:689px;" width="8" height="9" viewBox="0 0 8 9"><rect x="0.5" y="3.8" width="7" height="4.7" fill="#3D9CDB"/><path d="M2,3.8 V2.8 C2,0.6 6,0.6 6,2.8 V3.8" stroke="#3D9CDB" stroke-width="1.2" fill="none"/><rect x="3.3" y="5" width="1.4" height="2" fill="#fff"/></svg>
<svg class="a" style="left:1660px;top:686px;" width="16" height="12" viewBox="0 0 16 12"><text x="0" y="10.5" font-family="Liberation Sans" font-size="12.5" font-weight="700" fill="#388A34">C</text><path d="M10,2 V9 M13,2 V9 M8.5,4 H15 M8.5,7 H15" stroke="#388A34" stroke-width="1.3"/></svg>
<div class="a s" style="left:1683.30px;top:685.53px;font-size:14.5px;line-height:14.5px;color:#1E1E1E;letter-spacing:-0.160px;">S03StringAssertion.cs</div>
<svg class="a" style="left:1632.5px;top:709px;" width="8" height="12" viewBox="0 0 8 12"><path d="M1,1.5 L6,6 L1,10.5 Z" fill="none" stroke="#1E1E1E" stroke-width="1.2"/></svg>
<svg class="a" style="left:1649px;top:712px;" width="8" height="9" viewBox="0 0 8 9"><rect x="0.5" y="3.8" width="7" height="4.7" fill="#3D9CDB"/><path d="M2,3.8 V2.8 C2,0.6 6,0.6 6,2.8 V3.8" stroke="#3D9CDB" stroke-width="1.2" fill="none"/><rect x="3.3" y="5" width="1.4" height="2" fill="#fff"/></svg>
<svg class="a" style="left:1660px;top:709px;" width="16" height="12" viewBox="0 0 16 12"><text x="0" y="10.5" font-family="Liberation Sans" font-size="12.5" font-weight="700" fill="#388A34">C</text><path d="M10,2 V9 M13,2 V9 M8.5,4 H15 M8.5,7 H15" stroke="#388A34" stroke-width="1.3"/></svg>
<div class="a s" style="left:1683.30px;top:708.53px;font-size:14.5px;line-height:14.5px;color:#1E1E1E;width:208.70000000000005px;overflow:hidden;">S04NumericIComparableAssertion.cs</div>
<svg class="a" style="left:1632.5px;top:732px;" width="8" height="12" viewBox="0 0 8 12"><path d="M1,1.5 L6,6 L1,10.5 Z" fill="none" stroke="#1E1E1E" stroke-width="1.2"/></svg>
<svg class="a" style="left:1649px;top:735px;" width="8" height="9" viewBox="0 0 8 9"><rect x="0.5" y="3.8" width="7" height="4.7" fill="#3D9CDB"/><path d="M2,3.8 V2.8 C2,0.6 6,0.6 6,2.8 V3.8" stroke="#3D9CDB" stroke-width="1.2" fill="none"/><rect x="3.3" y="5" width="1.4" height="2" fill="#fff"/></svg>
<svg class="a" style="left:1660px;top:732px;" width="16" height="12" viewBox="0 0 16 12"><text x="0" y="10.5" font-family="Liberation Sans" font-size="12.5" font-weight="700" fill="#388A34">C</text><path d="M10,2 V9 M13,2 V9 M8.5,4 H15 M8.5,7 H15" stroke="#388A34" stroke-width="1.3"/></svg>
<div class="a s" style="left:1683.30px;top:731.53px;font-size:14.5px;line-height:14.5px;color:#1E1E1E;letter-spacing:-0.091px;">S05DateTimeAssertion.cs</div>
<svg class="a" style="left:1632.5px;top:755px;" width="8" height="12" viewBox="0 0 8 12"><path d="M1,1.5 L6,6 L1,10.5 Z" fill="none" stroke="#1E1E1E" stroke-width="1.2"/></svg>
<svg class="a" style="left:1649px;top:758px;" width="8" height="9" viewBox="0 0 8 9"><rect x="0.5" y="3.8" width="7" height="4.7" fill="#3D9CDB"/><path d="M2,3.8 V2.8 C2,0.6 6,0.6 6,2.8 V3.8" stroke="#3D9CDB" stroke-width="1.2" fill="none"/><rect x="3.3" y="5" width="1.4" height="2" fill="#fff"/></svg>
<svg class="a" style="left:1660px;top:755px;" width="16" height="12" viewBox="0 0 16 12"><text x="0" y="10.5" font-family="Liberation Sans" font-size="12.5" font-weight="700" fill="#388A34">C</text><path d="M10,2 V9 M13,2 V9 M8.5,4 H15 M8.5,7 H15" stroke="#388A34" stroke-width="1.3"/></svg>
<div class="a s" style="left:1683.30px;top:754.53px;font-size:14.5px;line-height:14.5px;color:#1E1E1E;width:208.70000000000005px;overflow:hidden;">S06TypeMethodPropertyAssembly.cs</div>
<svg class="a" style="left:1632.5px;top:778px;" width="8" height="12" viewBox="0 0 8 12"><path d="M1,1.5 L6,6 L1,10.5 Z" fill="none" stroke="#1E1E1E" stroke-width="1.2"/></svg>
<svg class="a" style="left:1649px;top:781px;" width="8" height="9" viewBox="0 0 8 9"><rect x="0.5" y="3.8" width="7" height="4.7" fill="#3D9CDB"/><path d="M2,3.8 V2.8 C2,0.6 6,0.6 6,2.8 V3.8" stroke="#3D9CDB" stroke-width="1.2" fill="none"/><rect x="3.3" y="5" width="1.4" height="2" fill="#fff"/></svg>
<svg class="a" style="left:1660px;top:778px;" width="16" height="12" viewBox="0 0 16 12"><text x="0" y="10.5" font-family="Liberation Sans" font-size="12.5" font-weight="700" fill="#388A34">C</text><path d="M10,2 V9 M13,2 V9 M8.5,4 H15 M8.5,7 H15" stroke="#388A34" stroke-width="1.3"/></svg>
<div class="a s" style="left:1683.30px;top:777.53px;font-size:14.5px;line-height:14.5px;color:#1E1E1E;letter-spacing:-0.227px;">S07ActionThreadTask.cs</div>
<svg class="a" style="left:1632.5px;top:801px;" width="8" height="12" viewBox="0 0 8 12"><path d="M1,1.5 L6,6 L1,10.5 Z" fill="none" stroke="#1E1E1E" stroke-width="1.2"/></svg>
<svg class="a" style="left:1649px;top:804px;" width="8" height="9" viewBox="0 0 8 9"><rect x="0.5" y="3.8" width="7" height="4.7" fill="#3D9CDB"/><path d="M2,3.8 V2.8 C2,0.6 6,0.6 6,2.8 V3.8" stroke="#3D9CDB" stroke-width="1.2" fill="none"/><rect x="3.3" y="5" width="1.4" height="2" fill="#fff"/></svg>
<svg class="a" style="left:1660px;top:801px;" width="16" height="12" viewBox="0 0 16 12"><text x="0" y="10.5" font-family="Liberation Sans" font-size="12.5" font-weight="700" fill="#388A34">C</text><path d="M10,2 V9 M13,2 V9 M8.5,4 H15 M8.5,7 H15" stroke="#388A34" stroke-width="1.3"/></svg>
<div class="a s" style="left:1683.30px;top:800.53px;font-size:14.5px;line-height:14.5px;color:#1E1E1E;letter-spacing:0.005px;">S08TypeNullableBoolean.cs</div>
<svg class="a" style="left:1632.5px;top:824px;" width="8" height="12" viewBox="0 0 8 12"><path d="M1,1.5 L6,6 L1,10.5 Z" fill="none" stroke="#1E1E1E" stroke-width="1.2"/></svg>
<svg class="a" style="left:1649px;top:827px;" width="8" height="9" viewBox="0 0 8 9"><rect x="0.5" y="3.8" width="7" height="4.7" fill="#3D9CDB"/><path d="M2,3.8 V2.8 C2,0.6 6,0.6 6,2.8 V3.8" stroke="#3D9CDB" stroke-width="1.2" fill="none"/><rect x="3.3" y="5" width="1.4" height="2" fill="#fff"/></svg>
<svg class="a" style="left:1660px;top:824px;" width="16" height="12" viewBox="0 0 16 12"><text x="0" y="10.5" font-family="Liberation Sans" font-size="12.5" font-weight="700" fill="#388A34">C</text><path d="M10,2 V9 M13,2 V9 M8.5,4 H15 M8.5,7 H15" stroke="#388A34" stroke-width="1.3"/></svg>
<div class="a s" style="left:1683.30px;top:823.53px;font-size:14.5px;line-height:14.5px;color:#1E1E1E;letter-spacing:-0.346px;">S09GuidEnum.cs</div>
<svg class="a" style="left:1632.5px;top:847px;" width="8" height="12" viewBox="0 0 8 12"><path d="M1,1.5 L6,6 L1,10.5 Z" fill="none" stroke="#1E1E1E" stroke-width="1.2"/></svg>
<svg class="a" style="left:1649px;top:850px;" width="8" height="9" viewBox="0 0 8 9"><rect x="0.5" y="3.8" width="7" height="4.7" fill="#3D9CDB"/><path d="M2,3.8 V2.8 C2,0.6 6,0.6 6,2.8 V3.8" stroke="#3D9CDB" stroke-width="1.2" fill="none"/><rect x="3.3" y="5" width="1.4" height="2" fill="#fff"/></svg>
<svg class="a" style="left:1660px;top:847px;" width="16" height="12" viewBox="0 0 16 12"><text x="0" y="10.5" font-family="Liberation Sans" font-size="12.5" font-weight="700" fill="#388A34">C</text><path d="M10,2 V9 M13,2 V9 M8.5,4 H15 M8.5,7 H15" stroke="#388A34" stroke-width="1.3"/></svg>
<div class="a s" style="left:1683.30px;top:846.53px;font-size:14.5px;line-height:14.5px;color:#1E1E1E;letter-spacing:-0.068px;">S1001IntCollectionAssert.cs</div>
<svg class="a" style="left:1632.5px;top:870px;" width="8" height="12" viewBox="0 0 8 12"><path d="M1,1.5 L6,6 L1,10.5 Z" fill="none" stroke="#1E1E1E" stroke-width="1.2"/></svg>
<svg class="a" style="left:1649px;top:873px;" width="8" height="9" viewBox="0 0 8 9"><rect x="0.5" y="3.8" width="7" height="4.7" fill="#3D9CDB"/><path d="M2,3.8 V2.8 C2,0.6 6,0.6 6,2.8 V3.8" stroke="#3D9CDB" stroke-width="1.2" fill="none"/><rect x="3.3" y="5" width="1.4" height="2" fill="#fff"/></svg>
<svg class="a" style="left:1660px;top:870px;" width="16" height="12" viewBox="0 0 16 12"><text x="0" y="10.5" font-family="Liberation Sans" font-size="12.5" font-weight="700" fill="#388A34">C</text><path d="M10,2 V9 M13,2 V9 M8.5,4 H15 M8.5,7 H15" stroke="#388A34" stroke-width="1.3"/></svg>
<div class="a s" style="left:1683.30px;top:869.53px;font-size:14.5px;line-height:14.5px;color:#1E1E1E;letter-spacing:-0.050px;">S1002StringCollectionAssert.cs</div>
<svg class="a" style="left:1632.5px;top:893px;" width="8" height="12" viewBox="0 0 8 12"><path d="M1,1.5 L6,6 L1,10.5 Z" fill="none" stroke="#1E1E1E" stroke-width="1.2"/></svg>
<svg class="a" style="left:1649px;top:896px;" width="8" height="8" viewBox="0 0 8 8"><path d="M4,0.5 V7.5 M0.5,4 H7.5" stroke="#388A34" stroke-width="1.6"/></svg>
<svg class="a" style="left:1660px;top:893px;" width="16" height="12" viewBox="0 0 16 12"><text x="0" y="10.5" font-family="Liberation Sans" font-size="12.5" font-weight="700" fill="#388A34">C</text><path d="M10,2 V9 M13,2 V9 M8.5,4 H15 M8.5,7 H15" stroke="#388A34" stroke-width="1.3"/></svg>
<div class="a s" style="left:1683.30px;top:892.53px;font-size:14.5px;line-height:14.5px;color:#1E1E1E;width:208.70000000000005px;overflow:hidden;">S1101ObjectCollectionAssertionEqual.cs</div>
<svg class="a" style="left:1896px;top:227px;" width="11" height="7" viewBox="0 0 11 7"><path d="M0,6.5 L5.5,0.5 L11,6.5 Z" fill="#868999"/></svg>
<div class="a" style="left:1896.5px;top:556px;width:11px;height:351px;background:#C2C3C9;"></div>
<svg class="a" style="left:1896px;top:915px;" width="11" height="7" viewBox="0 0 11 7"><path d="M0,0.5 H11 L5.5,6.5 Z" fill="#868999"/></svg>
<svg class="a" style="left:1581px;top:932px;" width="8" height="12" viewBox="0 0 8 12"><path d="M7.5,0 V12 L0,6 Z" fill="#868999"/></svg>
<div class="a" style="left:1594.5px;top:933px;width:160px;height:11px;background:#C2C3C9;"></div>
<svg class="a" style="left:1877px;top:932px;" width="8" height="12" viewBox="0 0 8 12"><path d="M0,0 V12 L7.5,6 Z" fill="#868999"/></svg>
<div class="a" style="left:1740px;top:948px;width:86px;height:25px;background:#F5F5F5;box-sizing:border-box;border:1px solid #CCCEDB;border-top:none;"></div>
<div class="a s" style="left:1580.00px;top:954.73px;font-size:14.5px;line-height:14.5px;color:#1E1E1E;letter-spacing:-0.020px;">Unit Test...</div>
<div class="a s" style="left:1666.00px;top:954.73px;font-size:14.5px;line-height:14.5px;color:#1E1E1E;letter-spacing:0.091px;">Properties</div>
<div class="a s" style="left:1748.00px;top:954.73px;font-size:14.5px;line-height:14.5px;color:#1C74BD;letter-spacing:0.045px;">Solution...</div>
<div class="a s" style="left:1834.00px;top:954.73px;font-size:14.5px;line-height:14.5px;color:#1E1E1E;letter-spacing:-0.250px;">Team Ex...</div>
<div class="a" style="left:0px;top:1013px;width:1920px;height:27px;background:#007ACC;"></div>
<svg class="a" style="left:5px;top:1021px;" width="22" height="16" viewBox="0 0 22 16"><path d="M5,1.5 H20.5 L17,14.5 H1.5 Z" fill="none" stroke="#fff" stroke-width="1.4"/></svg>
<div class="a s" style="left:35.00px;top:1021.73px;font-size:14.5px;line-height:14.5px;color:#FFFFFF;letter-spacing:-0.047px;">Field &#x27;_gamerPower1&#x27; is never used</div>
<div class="a s" style="left:827.50px;top:1021.73px;font-size:14.5px;line-height:14.5px;color:#FFFFFF;letter-spacing:-0.339px;">Ln 88</div>
<div class="a s" style="left:941.00px;top:1021.73px;font-size:14.5px;line-height:14.5px;color:#FFFFFF;letter-spacing:-0.154px;">Col 41</div>
<div class="a s" style="left:1055.00px;top:1021.73px;font-size:14.5px;line-height:14.5px;color:#FFFFFF;letter-spacing:-0.541px;">Ch 41</div>
<div class="a s" style="left:1225.00px;top:1021.73px;font-size:14.5px;line-height:14.5px;color:#FFFFFF;letter-spacing:-0.391px;">INS</div>
<svg class="a" style="left:1309px;top:1020px;" width="12" height="16" viewBox="0 0 12 16"><path d="M6,15 V2 M1,7 L6,1.5 L11,7" stroke="#fff" stroke-width="1.8" fill="none"/></svg>
<div class="a s" style="left:1332.00px;top:1021.73px;font-size:14.5px;line-height:14.5px;color:#FFFFFF;">0</div>
<svg class="a" style="left:1369px;top:1019px;" width="17" height="17" viewBox="0 0 17 17"><path d="M2,15 L3,11 L12,2 L15,5 L6,14 Z" fill="#fff"/></svg>
<div class="a s" style="left:1395.00px;top:1021.73px;font-size:14.5px;line-height:14.5px;color:#FFFFFF;letter-spacing:-0.570px;">10</div>
<svg class="a" style="left:1438px;top:1018px;" width="19" height="19" viewBox="0 0 19 19"><path d="M9.5,1 L18,9.5 L9.5,18 L1,9.5 Z" fill="#fff"/><circle cx="7" cy="7" r="1.8" fill="#007ACC"/><circle cx="12" cy="12" r="1.8" fill="#007ACC"/><path d="M7,7 L12,12" stroke="#007ACC" stroke-width="1.2"/></svg>
<div class="a s" style="left:1465.00px;top:1021.73px;font-size:14.5px;line-height:14.5px;color:#FFFFFF;letter-spacing:-0.969px;">KL01</div>
<svg class="a" style="left:1522px;top:1018px;" width="20" height="19" viewBox="0 0 20 19"><circle cx="3" cy="3" r="2" fill="#fff"/><circle cx="17" cy="3" r="2" fill="#fff"/><path d="M3,3 L10,10 L17,3 M10,10 V18" stroke="#fff" stroke-width="2" fill="none"/></svg>
<div class="a s" style="left:1550.00px;top:1021.73px;font-size:14.5px;line-height:14.5px;color:#FFFFFF;letter-spacing:-0.163px;">KL/04B_NUnit_KL/00_Main</div>
<svg class="a" style="left:1733px;top:1023px;" width="9" height="6" viewBox="0 0 9 6"><path d="M0,5.5 L4.5,0.5 L9,5.5 Z" fill="#fff"/></svg>
<svg class="a" style="left:1774px;top:1017px;" width="14" height="17" viewBox="0 0 14 17"><path d="M7,1 C3,1 2,4 2,8 V12 L0.5,14 H13.5 L12,12 V8 C12,4 11,1 7,1 Z" fill="#fff"/></svg>
<svg class="a" style="left:1786px;top:1025px;" width="15" height="15" viewBox="0 0 15 15"><circle cx="7.5" cy="7.5" r="7" fill="#E51400"/></svg>
<div class="a s" style="left:1790.00px;top:1028.19px;font-size:11px;line-height:11px;color:#FFFFFF;">4</div>
<svg class="a" style="left:1826px;top:1018px;" width="19" height="19" viewBox="0 0 19 19"><path d="M1,17 L4,6 H9 L7,11 H17 L13,17 Z" fill="none" stroke="#fff" stroke-width="1.5"/><path d="M9,2 L15,2 L10,10" fill="#F6B01E"/></svg>
<svg class="a" style="left:1864px;top:1017px;" width="23" height="22" viewBox="0 0 23 22"><circle cx="11" cy="11" r="10" fill="#007ACC" stroke="#fff" stroke-width="2"/><circle cx="18" cy="18" r="3.5" fill="#1E1E1E" stroke="#fff" stroke-width="1.2"/></svg>
<svg class="a" style="left:1892px;top:1015px;" width="24" height="24" viewBox="0 0 24 24"><circle cx="12" cy="12" r="11" fill="#2C9A2C" stroke="#fff" stroke-width="1.2"/><path d="M6,12.5 L10.5,17 L18,7" stroke="#fff" stroke-width="2.8" fill="none"/></svg>
<div class="a" style="left:872px;top:703px;width:737px;height:71px;background:#F5F5F5;box-sizing:border-box;border:1px solid #CCCEDB;"></div>
<svg class="a" style="left:888px;top:713px;" width="22" height="20" viewBox="0 0 22 20"><path d="M1,6 L9,2 L16,5 L16,10 L8,14 L1,11 Z" fill="#00539C"/><path d="M1,6 L8,9.5 L16,5" stroke="#DCE8F4" stroke-width="1" fill="none"/><rect x="11" y="14" width="6" height="5" fill="#424242"/><path d="M12,14 V12 C12,10 16,10 16,12 V14" stroke="#424242" stroke-width="1.2" fill="none"/></svg>
<div class="a s" style="left:913.50px;top:716.23px;font-size:14.5px;line-height:14.5px;color:#1E1E1E;letter-spacing:0.248px;">(field)</div>
<div class="a s" style="left:957.50px;top:716.23px;font-size:14.5px;line-height:14.5px;color:#2B91AF;letter-spacing:0.085px;">GamerPowerH S1101ObjectCollectionAssertionEqualAndCompareToOtherClass</div>
<div class="a s" style="left:1480.50px;top:716.23px;font-size:14.5px;line-height:14.5px;color:#1E1E1E;letter-spacing:-0.340px;">._gamerPower1V2</div>
<div class="a s" style="left:888.00px;top:750.73px;font-size:14.5px;line-height:14.5px;color:#1E1E1E;letter-spacing:-0.021px;">Field &#x27;_gamerPower1V2&#x27; is never used</div></body></html>
